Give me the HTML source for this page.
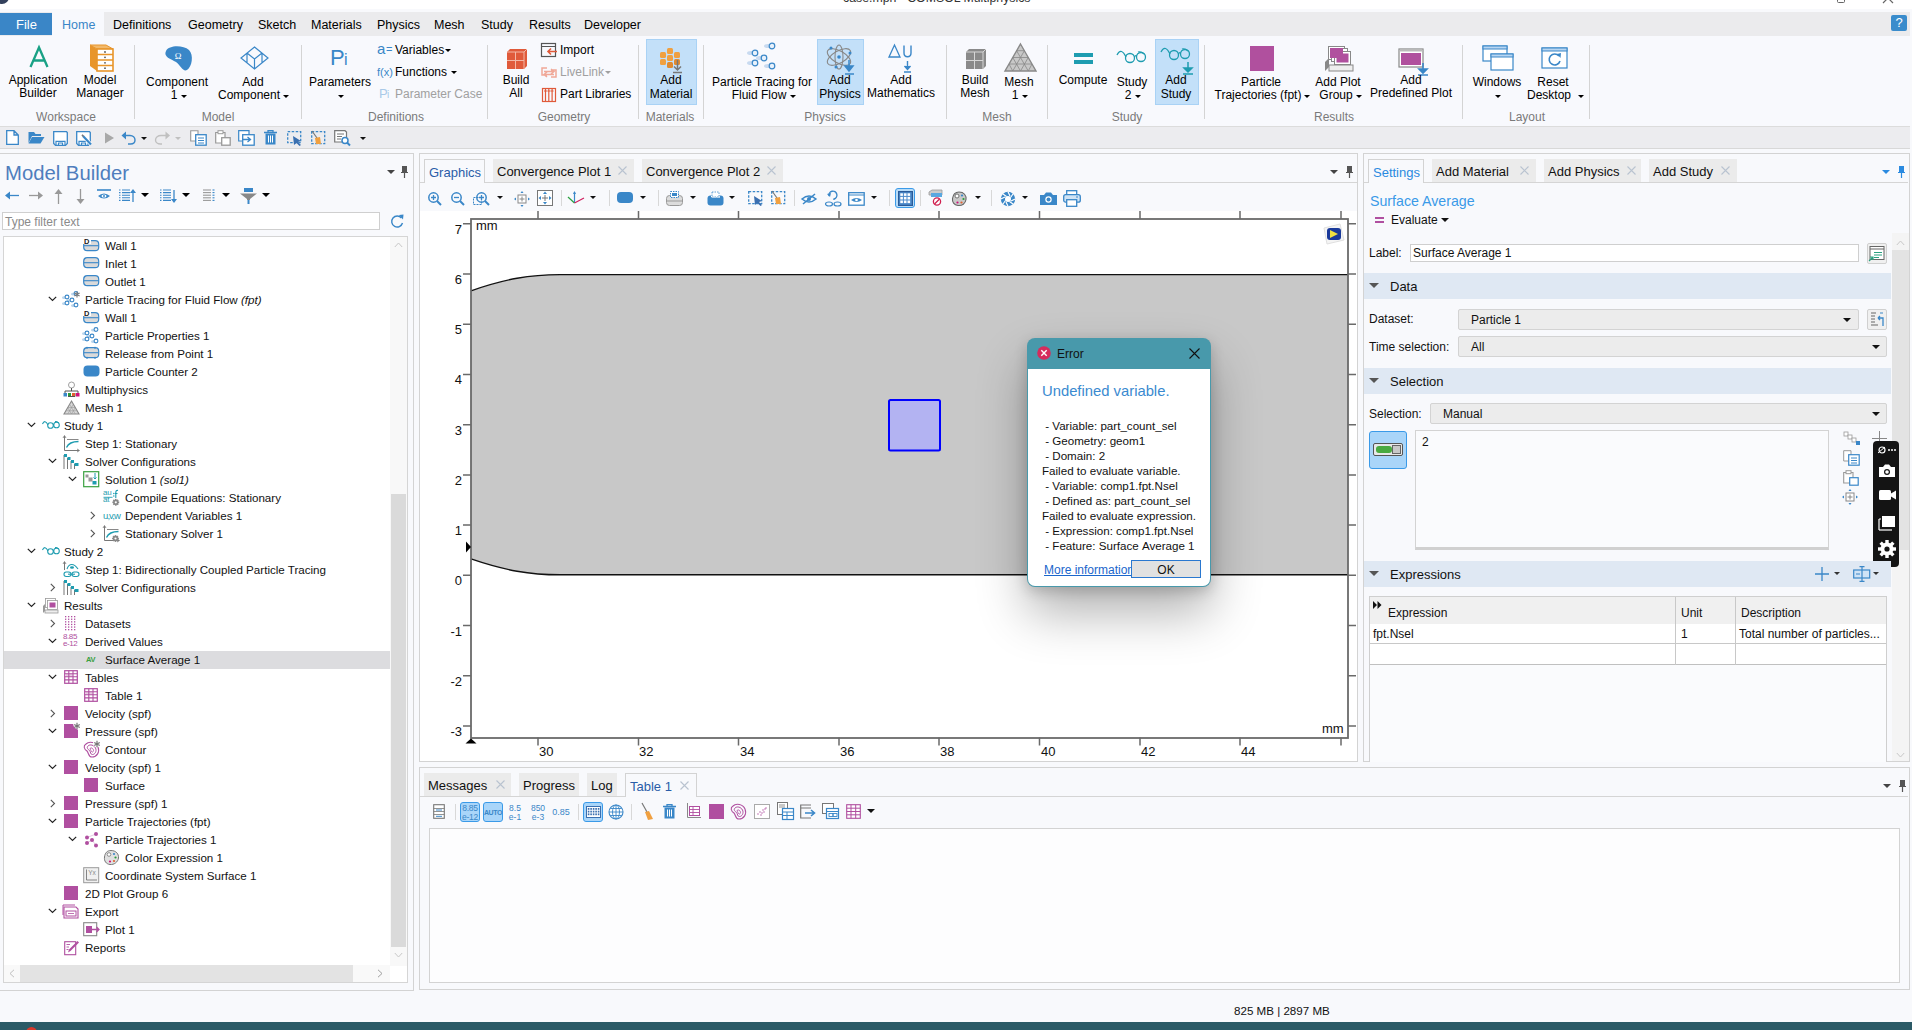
<!DOCTYPE html>
<html><head><meta charset="utf-8">
<style>
*{margin:0;padding:0;box-sizing:border-box}
html,body{width:1912px;height:1030px;overflow:hidden;background:#f8f9fc;font-family:"Liberation Sans",sans-serif;font-size:12px;color:#000}
.a{position:absolute}
.t{position:absolute;white-space:nowrap;line-height:1}
svg{position:absolute;overflow:visible}
#title{left:0;top:0;width:1912px;height:9px;background:#fff}
#menubar{left:0;top:12px;width:1910px;height:24px;background:#ebebed}
#ribbon{left:0;top:36px;width:1910px;height:91px;background:#f8f9fd;border-bottom:1px solid #dcdcdc}
#qat{left:0;top:127px;width:1910px;height:22px;background:#ececef;border-bottom:1px solid #d8d8d8}
.panel{position:absolute;border:1px solid #d3d3d3;background:#f8f9fc}
.tab{position:absolute;height:23px;background:#ebebeb;font-size:13px;line-height:23px;padding-left:5px;white-space:nowrap}
.tab.act{background:#f8f9fc;border:1px solid #d3d3d3;border-bottom:none;color:#2a5da8}
.x{color:#b8c4d4;font-size:14px}
.tree{font-size:12px}
.ri{position:absolute;white-space:nowrap;line-height:18px;height:18px}
</style></head><body>

<div id="title" class="a"></div>
<div id="menubar" class="a"></div>
<div id="ribbon" class="a"></div>
<div id="qat" class="a"></div>
<!-- title -->
<div class="t" style="left:843px;top:-8px;font-size:12.3px;color:#333">case.mph - COMSOL Multiphysics</div>
<div class="a" style="left:1837px;top:-5px;width:8px;height:8px;border:1.2px solid #666;border-radius:1.5px"></div>
<svg style="left:1882px;top:0" width="12" height="5"><path d="M1,3 L4.5,-0.5 M7.5,-0.5 L11,3" stroke="#666" stroke-width="1.2"/></svg>
<svg style="left:0;top:0" width="12" height="5"><circle cx="2" cy="-3" r="7" fill="#33415c"/></svg>
<!-- menu -->
<div class="a" style="left:0;top:13px;width:52px;height:22px;background:#3a86c7"></div>
<div class="t" style="left:16px;top:18px;font-size:13px;color:#fff">File</div>
<div class="a" style="left:52px;top:12px;width:52px;height:24px;background:#f8f9fd"></div>
<div class="t" style="left:62px;top:19px;font-size:12.5px;color:#3a86c7">Home</div>
<div class="t" style="left:113px;top:19px;font-size:12.5px">Definitions</div>
<div class="t" style="left:188px;top:19px;font-size:12.5px">Geometry</div>
<div class="t" style="left:258px;top:19px;font-size:12.5px">Sketch</div>
<div class="t" style="left:311px;top:19px;font-size:12.5px">Materials</div>
<div class="t" style="left:377px;top:19px;font-size:12.5px">Physics</div>
<div class="t" style="left:434px;top:19px;font-size:12.5px">Mesh</div>
<div class="t" style="left:481px;top:19px;font-size:12.5px">Study</div>
<div class="t" style="left:529px;top:19px;font-size:12.5px">Results</div>
<div class="t" style="left:584px;top:19px;font-size:12.5px">Developer</div>
<div class="a" style="left:1891px;top:15px;width:16px;height:16px;border-radius:2px;background:#3a8ccc;color:#fff;font-size:13px;text-align:center;line-height:16px">?</div>
<!-- RIBBON -->
<div id="rib"></div>

<!-- Model builder panel -->
<div class="panel" style="left:0;top:153px;width:414px;height:838px;border-left:none"></div>
<!-- graphics panel -->
<div class="panel" style="left:419px;top:153px;width:939px;height:609px"></div>
<!-- settings panel -->
<div class="panel" style="left:1363px;top:153px;width:547px;height:609px"></div>
<!-- messages panel -->
<div class="panel" style="left:419px;top:767px;width:1491px;height:223px"></div>
<!-- taskbar -->
<div class="a" style="left:0;top:1022px;width:1912px;height:8px;background:#2b5a66"></div>
<div class="a" style="left:26px;top:1027px;width:11px;height:11px;border-radius:50%;background:#d8392b"></div>

<div class="a" style="left:134px;top:45px;width:1px;height:74px;background:#d4d4d4"></div>
<div class="a" style="left:301px;top:45px;width:1px;height:74px;background:#d4d4d4"></div>
<div class="a" style="left:487px;top:45px;width:1px;height:74px;background:#d4d4d4"></div>
<div class="a" style="left:638px;top:45px;width:1px;height:74px;background:#d4d4d4"></div>
<div class="a" style="left:703px;top:45px;width:1px;height:74px;background:#d4d4d4"></div>
<div class="a" style="left:946px;top:45px;width:1px;height:74px;background:#d4d4d4"></div>
<div class="a" style="left:1047px;top:45px;width:1px;height:74px;background:#d4d4d4"></div>
<div class="a" style="left:1204px;top:45px;width:1px;height:74px;background:#d4d4d4"></div>
<div class="a" style="left:1462px;top:45px;width:1px;height:74px;background:#d4d4d4"></div>
<div class="a" style="left:1589px;top:45px;width:1px;height:74px;background:#d4d4d4"></div>
<div class="t" style="left:-84px;width:300px;text-align:center;top:111px;font-size:12px;color:#7a7a7a;">Workspace</div>
<div class="t" style="left:68px;width:300px;text-align:center;top:111px;font-size:12px;color:#7a7a7a;">Model</div>
<div class="t" style="left:246px;width:300px;text-align:center;top:111px;font-size:12px;color:#7a7a7a;">Definitions</div>
<div class="t" style="left:414px;width:300px;text-align:center;top:111px;font-size:12px;color:#7a7a7a;">Geometry</div>
<div class="t" style="left:520px;width:300px;text-align:center;top:111px;font-size:12px;color:#7a7a7a;">Materials</div>
<div class="t" style="left:675px;width:300px;text-align:center;top:111px;font-size:12px;color:#7a7a7a;">Physics</div>
<div class="t" style="left:847px;width:300px;text-align:center;top:111px;font-size:12px;color:#7a7a7a;">Mesh</div>
<div class="t" style="left:977px;width:300px;text-align:center;top:111px;font-size:12px;color:#7a7a7a;">Study</div>
<div class="t" style="left:1184px;width:300px;text-align:center;top:111px;font-size:12px;color:#7a7a7a;">Results</div>
<div class="t" style="left:1377px;width:300px;text-align:center;top:111px;font-size:12px;color:#7a7a7a;">Layout</div>
<div class="a" style="left:646px;top:39px;width:51px;height:66px;background:#c3e0f9;border:1px solid #a9d2f5"></div>
<div class="a" style="left:817px;top:39px;width:47px;height:66px;background:#c3e0f9;border:1px solid #a9d2f5"></div>
<div class="a" style="left:1155px;top:39px;width:44px;height:66px;background:#c3e0f9;border:1px solid #a9d2f5"></div>
<svg style="left:29px;top:46px" width="20" height="22" viewBox="0 0 20 22"><path d="M1.5,21 L10,1.5 L18.5,21 M4.8,14.5 H15.2" stroke="#19a185" stroke-width="2.3" fill="none"/></svg>
<div class="t" style="left:-112px;width:300px;text-align:center;top:74px;font-size:12px;color:#000;">Application</div>
<div class="t" style="left:-112px;width:300px;text-align:center;top:87px;font-size:12px;color:#000;">Builder</div>
<svg style="left:89px;top:44px" width="26" height="28" viewBox="0 0 26 28"><path d="M1,1 L8,5 L8,27 L1,22 Z" fill="#e8952a"/><path d="M1,1 L17,1 L24,5 L8,5 Z" fill="#f2b96a" stroke="#e8952a" stroke-width="1"/><rect x="8" y="5" width="16" height="22" fill="#fff" stroke="#e8952a" stroke-width="1.6"/><path d="M8,10.5 H24 M8,16 H24 M8,21.5 H24" stroke="#e8952a" stroke-width="1.4"/><circle cx="16" cy="8" r="0.9" fill="#555"/><circle cx="16" cy="13.3" r="0.9" fill="#555"/><circle cx="16" cy="18.8" r="0.9" fill="#555"/><circle cx="16" cy="24.2" r="0.9" fill="#555"/></svg>
<div class="t" style="left:-50px;width:300px;text-align:center;top:74px;font-size:12px;color:#000;">Model</div>
<div class="t" style="left:-50px;width:300px;text-align:center;top:87px;font-size:12px;color:#000;">Manager</div>
<svg style="left:163px;top:45px" width="30" height="27" viewBox="0 0 30 27"><path d="M3,6 C6,0 20,0 26,5 C31,10 29,22 24,25 C20,27 18,21 13,17 C8,14 0,12 3,6 Z" fill="#3a87c8"/><text x="15" y="14" font-size="9" fill="#fff" text-anchor="middle" font-family="Liberation Serif">Ω</text></svg>
<div class="t" style="left:27px;width:300px;text-align:center;top:76px;font-size:12px;color:#000;">Component</div>
<div class="t" style="left:24px;width:300px;text-align:center;top:89px;font-size:12px;color:#000;">1</div>
<div class="a" style="left:181px;top:95px;width:0;height:0;border-left:3px solid transparent;border-right:3px solid transparent;border-top:3px solid #000"></div>
<svg style="left:239px;top:46px" width="31" height="24" viewBox="0 0 31 24"><path d="M15.5,1 L29,12 L15.5,23 L2,12 Z M8,7 L15.5,13 L23,7 M15.5,13 V23 M8,7 V17 M23,7 V17" stroke="#3a87c8" stroke-width="1.2" fill="none"/></svg>
<div class="t" style="left:103px;width:300px;text-align:center;top:76px;font-size:12px;color:#000;">Add</div>
<div class="t" style="left:99px;width:300px;text-align:center;top:89px;font-size:12px;color:#000;">Component</div>
<div class="a" style="left:283px;top:95px;width:0;height:0;border-left:3px solid transparent;border-right:3px solid transparent;border-top:3px solid #000"></div>
<div class="t" style="left:330px;top:47px;font-size:22px;color:#3a87c8;">P</div>
<div class="t" style="left:344px;top:52px;font-size:16px;color:#3a87c8;">i</div>
<div class="t" style="left:190px;width:300px;text-align:center;top:76px;font-size:12px;color:#000;">Parameters</div>
<div class="a" style="left:338px;top:95px;width:0;height:0;border-left:3px solid transparent;border-right:3px solid transparent;border-top:3px solid #000"></div>
<div class="t" style="left:377px;top:41px;font-size:15px;color:#3a87c8;">a</div>
<div class="t" style="left:386px;top:44px;font-size:11px;color:#3a87c8;">=</div>
<div class="t" style="left:395px;top:44px;font-size:12px;color:#000;">Variables</div>
<div class="a" style="left:445px;top:49px;width:0;height:0;border-left:3px solid transparent;border-right:3px solid transparent;border-top:3px solid #000"></div>
<div class="t" style="left:377px;top:67px;font-size:11px;color:#3a87c8;">f(x)</div>
<div class="t" style="left:395px;top:66px;font-size:12px;color:#000;">Functions</div>
<div class="a" style="left:451px;top:71px;width:0;height:0;border-left:3px solid transparent;border-right:3px solid transparent;border-top:3px solid #000"></div>
<div class="t" style="left:379px;top:87px;font-size:13px;color:#a9c9e8;">P</div>
<div class="t" style="left:387px;top:90px;font-size:10px;color:#a9c9e8;">i</div>
<div class="t" style="left:395px;top:88px;font-size:12px;color:#a0a0a0;">Parameter Case</div>
<svg style="left:506px;top:48px" width="22" height="22" viewBox="0 0 22 22"><path d="M1,4 L4,1 L21,1 L21,18 L18,21 L1,21 Z" fill="#e05a3a"/><path d="M1,4 H18 V21 M18,4 L21,1 M1,12.5 H18 M9.5,4 V21" stroke="#f3b7a5" stroke-width="1" fill="none"/></svg>
<div class="t" style="left:366px;width:300px;text-align:center;top:74px;font-size:12px;color:#000;">Build</div>
<div class="t" style="left:366px;width:300px;text-align:center;top:87px;font-size:12px;color:#000;">All</div>
<svg style="left:541px;top:43px" width="17" height="14" viewBox="0 0 17 14"><rect x="0.5" y="0.5" width="14" height="13" fill="none" stroke="#555" stroke-width="1.2"/><path d="M0.5,3.5 H14.5" stroke="#555"/><path d="M16,8.5 H7 M10,5.5 L7,8.5 L10,11.5" stroke="#e05a3a" stroke-width="1.6" fill="none"/></svg>
<div class="t" style="left:560px;top:44px;font-size:12px;color:#000;">Import</div>
<svg style="left:541px;top:66px" width="16" height="13" viewBox="0 0 16 13"><path d="M6,2 H1 V9 H6 M10,4 H15 V11 H10 M3,5.5 H13 M10,3 L13,5.5 L10,8 M13,8.5 H3 M6,6 L3,8.5 L6,11" stroke="#f0a898" stroke-width="1.5" fill="none"/></svg>
<div class="t" style="left:560px;top:66px;font-size:12px;color:#a0a0a0;">LiveLink</div>
<div class="a" style="left:605px;top:71px;width:0;height:0;border-left:3px solid transparent;border-right:3px solid transparent;border-top:3px solid #a0a0a0"></div>
<svg style="left:542px;top:87px" width="15" height="15" viewBox="0 0 15 15"><rect x="0.5" y="1.5" width="13" height="13" fill="none" stroke="#e05a3a" stroke-width="1.2"/><path d="M3.5,1 V14 M6.8,1 V14 M10.1,1 V14 M2,4 H5 M5.3,4 H8.3 M8.6,4 H11.6" stroke="#e05a3a" stroke-width="1.2"/></svg>
<div class="t" style="left:560px;top:88px;font-size:12px;color:#000;">Part Libraries</div>
<svg style="left:657px;top:47px" width="26" height="27" viewBox="0 0 26 27"><rect x="3" y="5" width="6" height="6" rx="1.5" fill="#f0a040"/><rect x="10" y="1" width="6" height="6" rx="1.5" fill="#f0a040"/><rect x="17" y="5" width="6" height="6" rx="1.5" fill="#f0a040"/><rect x="3" y="12" width="6" height="6" rx="1.5" fill="#f0a040"/><rect x="10" y="8" width="6" height="6" rx="1.5" fill="#f0a040"/><rect x="17" y="12" width="6" height="6" rx="1.5" fill="#e08a30"/><rect x="10" y="15" width="6" height="6" rx="1.5" fill="#e08a30"/><path d="M20.5,13 V23 M17,19.5 L20.5,23 L24,19.5 M16,25.5 H25" stroke="#777" stroke-width="1.5" fill="none"/></svg>
<div class="t" style="left:521px;width:300px;text-align:center;top:74px;font-size:12px;color:#000;">Add</div>
<div class="t" style="left:521px;width:300px;text-align:center;top:88px;font-size:12px;color:#000;">Material</div>
<svg style="left:749px;top:43px" width="30" height="28" viewBox="0 0 30 28"><ellipse cx="19" cy="3" rx="4" ry="2" fill="#c8daf0"/><circle cx="23" cy="3" r="2.8" fill="#e8f1fb" stroke="#3a87c8" stroke-width="1.2"/><ellipse cx="2" cy="10" rx="4" ry="2" fill="#c8daf0"/><circle cx="6" cy="10" r="2.8" fill="#e8f1fb" stroke="#3a87c8" stroke-width="1.2"/><ellipse cx="11" cy="15" rx="4" ry="2" fill="#c8daf0"/><circle cx="15" cy="15" r="2.8" fill="#e8f1fb" stroke="#3a87c8" stroke-width="1.2"/><ellipse cx="2" cy="20" rx="4" ry="2" fill="#c8daf0"/><circle cx="6" cy="20" r="2.8" fill="#e8f1fb" stroke="#3a87c8" stroke-width="1.2"/><ellipse cx="19" cy="23" rx="4" ry="2" fill="#c8daf0"/><circle cx="23" cy="23" r="2.8" fill="#e8f1fb" stroke="#3a87c8" stroke-width="1.2"/></svg>
<div class="t" style="left:612px;width:300px;text-align:center;top:76px;font-size:12px;color:#000;">Particle Tracing for</div>
<div class="t" style="left:609px;width:300px;text-align:center;top:89px;font-size:12px;color:#000;">Fluid Flow</div>
<div class="a" style="left:790px;top:95px;width:0;height:0;border-left:3px solid transparent;border-right:3px solid transparent;border-top:3px solid #000"></div>
<svg style="left:826px;top:43px" width="30" height="32" viewBox="0 0 30 32"><ellipse cx="13" cy="14" rx="13" ry="6" fill="none" stroke="#888" stroke-width="1.1" transform="rotate(30 13 14)"/><ellipse cx="13" cy="14" rx="13" ry="6" fill="none" stroke="#888" stroke-width="1.1" transform="rotate(-30 13 14)"/><ellipse cx="13" cy="14" rx="4" ry="12" fill="none" stroke="#888" stroke-width="1.1"/><circle cx="13" cy="14" r="1.8" fill="#3a87c8"/><circle cx="5" cy="5" r="1.5" fill="#3a87c8"/><circle cx="24" cy="10" r="1.5" fill="#3a87c8"/><circle cx="10" cy="24" r="1.5" fill="#3a87c8"/><path d="M23,17 V27 M19,23 H27 L23,28 Z M19,31 H28" stroke="#3a87c8" stroke-width="1.5" fill="#3a87c8"/></svg>
<div class="t" style="left:690px;width:300px;text-align:center;top:74px;font-size:12px;color:#000;">Add</div>
<div class="t" style="left:690px;width:300px;text-align:center;top:88px;font-size:12px;color:#000;">Physics</div>
<svg style="left:888px;top:44px" width="30" height="30" viewBox="0 0 30 30"><path d="M1,13 L6.5,1 L12,13 Z" fill="none" stroke="#3a87c8" stroke-width="1.3"/><path d="M16,1.5 V9 C16,14 23,14 23,9 V1.5" fill="none" stroke="#3a87c8" stroke-width="1.4"/><path d="M19.5,17 V25 M16.5,22 L19.5,25.5 L22.5,22 M16,28 H23" stroke="#3a87c8" stroke-width="1.4" fill="#3a87c8"/></svg>
<div class="t" style="left:751px;width:300px;text-align:center;top:74px;font-size:12px;color:#000;">Add</div>
<div class="t" style="left:751px;width:300px;text-align:center;top:87px;font-size:12px;color:#000;">Mathematics</div>
<svg style="left:965px;top:48px" width="22" height="22" viewBox="0 0 22 22"><path d="M1,4 L4,1 L21,1 L21,18 L18,21 L1,21 Z" fill="#8a8a8a"/><path d="M1,4 H18 V21 M18,4 L21,1 M1,12.5 H18 M9.5,4 V21" stroke="#d6d6d6" stroke-width="1" fill="none"/></svg>
<div class="t" style="left:825px;width:300px;text-align:center;top:74px;font-size:12px;color:#000;">Build</div>
<div class="t" style="left:825px;width:300px;text-align:center;top:87px;font-size:12px;color:#000;">Mesh</div>
<svg style="left:1004px;top:43px" width="33" height="29" viewBox="0 0 33 29"><path d="M16.5,1 L32,28 L1,28 Z" fill="#c8c8c8" stroke="#888" stroke-width="1.4"/><path d="M8.75,14.5 H24.25 M5,21 H28 M12.6,7.7 H20.4 M16.5,28 L24.25,14.5 M16.5,28 L8.75,14.5 M8.75,28 L20.4,7.7 M24.25,28 L12.6,7.7 M5,21 L8.75,28 M28,21 L24.25,28" stroke="#888" stroke-width="0.8" fill="none"/></svg>
<div class="t" style="left:869px;width:300px;text-align:center;top:76px;font-size:12px;color:#000;">Mesh</div>
<div class="t" style="left:865px;width:300px;text-align:center;top:89px;font-size:12px;color:#000;">1</div>
<div class="a" style="left:1022px;top:95px;width:0;height:0;border-left:3px solid transparent;border-right:3px solid transparent;border-top:3px solid #000"></div>
<div class="a" style="left:1074px;top:53px;width:19px;height:4px;background:#1e9cb0"></div>
<div class="a" style="left:1074px;top:60px;width:19px;height:4px;background:#1e9cb0"></div>
<div class="t" style="left:933px;width:300px;text-align:center;top:74px;font-size:12px;color:#000;">Compute</div>
<svg style="left:1116px;top:49px" width="32" height="16" viewBox="0 0 32 16"><path d="M1,6 C4,0 7,2 10,8" fill="none" stroke="#1e9cb0" stroke-width="1.3"/><circle cx="14" cy="9" r="4.5" fill="none" stroke="#1e9cb0" stroke-width="1.3"/><circle cx="25" cy="8" r="4.5" fill="none" stroke="#1e9cb0" stroke-width="1.3"/><path d="M18.5,8 Q19.5,6 20.5,7 M22,3 Q25,2 28,5" fill="none" stroke="#1e9cb0" stroke-width="1.2"/></svg>
<div class="t" style="left:982px;width:300px;text-align:center;top:76px;font-size:12px;color:#000;">Study</div>
<div class="t" style="left:978px;width:300px;text-align:center;top:89px;font-size:12px;color:#000;">2</div>
<div class="a" style="left:1135px;top:95px;width:0;height:0;border-left:3px solid transparent;border-right:3px solid transparent;border-top:3px solid #000"></div>
<svg style="left:1160px;top:46px" width="32" height="16" viewBox="0 0 32 16"><path d="M1,6 C4,0 7,2 10,8" fill="none" stroke="#1e9cb0" stroke-width="1.3"/><circle cx="14" cy="9" r="4.5" fill="none" stroke="#1e9cb0" stroke-width="1.3"/><circle cx="25" cy="8" r="4.5" fill="none" stroke="#1e9cb0" stroke-width="1.3"/><path d="M18.5,8 Q19.5,6 20.5,7 M22,3 Q25,2 28,5" fill="none" stroke="#1e9cb0" stroke-width="1.2"/></svg>
<svg style="left:1182px;top:62px" width="12" height="13" viewBox="0 0 12 13"><path d="M6,0 V9 M2,6 H10 L6,10 Z M1,12 H11" stroke="#1e9cb0" stroke-width="1.5" fill="#1e9cb0"/></svg>
<div class="t" style="left:1026px;width:300px;text-align:center;top:74px;font-size:12px;color:#000;">Add</div>
<div class="t" style="left:1026px;width:300px;text-align:center;top:88px;font-size:12px;color:#000;">Study</div>
<div class="a" style="left:1250px;top:46px;width:24px;height:25px;background:#b0509e"></div>
<div class="t" style="left:1111px;width:300px;text-align:center;top:76px;font-size:12px;color:#000;">Particle</div>
<div class="t" style="left:1108px;width:300px;text-align:center;top:89px;font-size:12px;color:#000;">Trajectories (fpt)</div>
<div class="a" style="left:1304px;top:95px;width:0;height:0;border-left:3px solid transparent;border-right:3px solid transparent;border-top:3px solid #000"></div>
<svg style="left:1324px;top:45px" width="31" height="28" viewBox="0 0 31 28"><path d="M1,17 L5,13 V22 L1,26 Z" fill="#888"/><rect x="5" y="20" width="24" height="6" fill="#eee" stroke="#888" stroke-width="1"/><rect x="4.5" y="1.5" width="16" height="13" fill="#fff" stroke="#888"/><rect x="7.5" y="3.5" width="16" height="13" fill="#fff" stroke="#888"/><rect x="10.5" y="6.5" width="16" height="13" fill="#fff" stroke="#888"/><rect x="12.5" y="8.5" width="12" height="9" fill="#b0509e"/><rect x="6" y="3" width="13" height="10" fill="#b0509e"/></svg>
<div class="t" style="left:1188px;width:300px;text-align:center;top:76px;font-size:12px;color:#000;">Add Plot</div>
<div class="t" style="left:1186px;width:300px;text-align:center;top:89px;font-size:12px;color:#000;">Group</div>
<div class="a" style="left:1356px;top:95px;width:0;height:0;border-left:3px solid transparent;border-right:3px solid transparent;border-top:3px solid #000"></div>
<svg style="left:1398px;top:48px" width="31" height="28" viewBox="0 0 31 28"><rect x="1" y="1" width="24" height="18" fill="#fff" stroke="#888" stroke-width="1.2"/><rect x="1.5" y="1.5" width="23" height="2" fill="#bbb"/><rect x="3" y="5" width="20" height="12" fill="#b0509e"/><path d="M25,15 V25 M21,21 H29 L25,25 Z M20,27 H30" stroke="#3a87c8" stroke-width="1.6" fill="#3a87c8"/></svg>
<div class="t" style="left:1261px;width:300px;text-align:center;top:74px;font-size:12px;color:#000;">Add</div>
<div class="t" style="left:1261px;width:300px;text-align:center;top:87px;font-size:12px;color:#000;">Predefined Plot</div>
<svg style="left:1482px;top:45px" width="33" height="27" viewBox="0 0 33 27"><rect x="1" y="1" width="24" height="15" fill="#fff" stroke="#3a87c8" stroke-width="1.2"/><rect x="1" y="1" width="24" height="3" fill="#b8d6f2" stroke="#3a87c8" stroke-width="1"/><rect x="9" y="9" width="22" height="16" fill="#fff" stroke="#3a87c8" stroke-width="1.2"/><rect x="9" y="9" width="22" height="3" fill="#b8d6f2" stroke="#3a87c8" stroke-width="1"/></svg>
<div class="t" style="left:1347px;width:300px;text-align:center;top:76px;font-size:12px;color:#000;">Windows</div>
<div class="a" style="left:1495px;top:95px;width:0;height:0;border-left:3px solid transparent;border-right:3px solid transparent;border-top:3px solid #000"></div>
<svg style="left:1541px;top:47px" width="28" height="23" viewBox="0 0 28 23"><rect x="1" y="1" width="25" height="20" fill="#fff" stroke="#3a87c8" stroke-width="1.2"/><rect x="1" y="1" width="25" height="3" fill="#b8d6f2" stroke="#3a87c8" stroke-width="1"/><path d="M18,9 A5.5,5.5 0 1 0 19,14" fill="none" stroke="#3a87c8" stroke-width="1.6"/><path d="M16,7 L20,6 L19.5,11 Z" fill="#3a87c8"/></svg>
<div class="t" style="left:1403px;width:300px;text-align:center;top:76px;font-size:12px;color:#000;">Reset</div>
<div class="t" style="left:1399px;width:300px;text-align:center;top:89px;font-size:12px;color:#000;">Desktop</div>
<div class="a" style="left:1578px;top:95px;width:0;height:0;border-left:3px solid transparent;border-right:3px solid transparent;border-top:3px solid #000"></div>
<svg style="left:6px;top:130px" width="13" height="15" viewBox="0 0 13 15"><path d="M0.7,0.7 H8 L12.3,5 V14.3 H0.7 Z M8,0.7 V5 H12.3" fill="#fff" stroke="#3a87c8" stroke-width="1.3"/></svg>
<svg style="left:28px;top:131px" width="17" height="13" viewBox="0 0 17 13"><path d="M0.5,1 H6 L7.5,3 H13 V5 H4 L0.5,12 Z" fill="#3a87c8"/><path d="M4,6 H16.5 L12.5,12.5 H0.5 Z" fill="#3a87c8"/></svg>
<svg style="left:53px;top:131px" width="15" height="15" viewBox="0 0 15 15"><path d="M0.7,0.7 H13.5 L14.3,1.5 V12.5 L12.5,14.3 H2.5 L0.7,12.5 Z" fill="#fff" stroke="#3a87c8" stroke-width="1.3"/><path d="M3,14 V10.3 H12 V14 M5.5,14 V12 H9.5 V14" fill="none" stroke="#3a87c8" stroke-width="1.2"/></svg>
<svg style="left:76px;top:131px" width="17" height="16" viewBox="0 0 17 16"><path d="M0.7,0.7 H13.5 L14.3,1.5 V12.5 L12.5,14.3 H2.5 L0.7,12.5 Z" fill="#fff" stroke="#3a87c8" stroke-width="1.3"/><path d="M3,14 V10.3 H12 V14 M5.5,14 V12 H9.5 V14" fill="none" stroke="#3a87c8" stroke-width="1.2"/><path d="M6.5,4.5 L15,13.5" stroke="#fff" stroke-width="3.5"/><path d="M7,5 L15,13.5" stroke="#3a87c8" stroke-width="2.2"/><path d="M6,3.8 L7.5,5.5" stroke="#777" stroke-width="1.6"/></svg>
<svg style="left:104px;top:132px" width="11" height="12" viewBox="0 0 11 12"><path d="M1,0.5 L10,6 L1,11.5 Z" fill="#a8a8a8"/></svg>
<svg style="left:121px;top:131px" width="15" height="14" viewBox="0 0 15 14"><path d="M2,4.5 H9 C12,4.5 14,6.5 14,9 C14,11.5 12,13 9.5,13 H7" fill="none" stroke="#3a87c8" stroke-width="1.4"/><path d="M0.5,4.5 L5,0.5 V8.5 Z" fill="#3a87c8"/></svg>
<div class="a" style="left:141px;top:137px;width:0;height:0;border-left:3px solid transparent;border-right:3px solid transparent;border-top:3px solid #111"></div>
<svg style="left:154px;top:131px" width="17" height="14" viewBox="0 0 17 14"><path d="M14,4.5 H7 C4,4.5 1.5,6.5 1.5,9 C1.5,11.5 4,13 6.5,13 H8" fill="none" stroke="#c0c0c0" stroke-width="1.4"/><path d="M16,4.5 L11.5,0.5 V8.5 Z" fill="#c0c0c0"/></svg>
<div class="a" style="left:175px;top:137px;width:0;height:0;border-left:3px solid transparent;border-right:3px solid transparent;border-top:3px solid #c0c0c0"></div>
<svg style="left:190px;top:130px" width="17" height="16" viewBox="0 0 17 16"><path d="M0.7,0.7 H8 V11 H0.7 Z" fill="#fff" stroke="#999" stroke-width="1.1"/><rect x="5.7" y="4.7" width="10.5" height="10.5" fill="#fff" stroke="#3a87c8" stroke-width="1.3"/><path d="M8,8 H14 M8,10.5 H14 M8,13 H14" stroke="#3a87c8" stroke-width="1"/></svg>
<svg style="left:215px;top:130px" width="16" height="16" viewBox="0 0 16 16"><path d="M0.7,2.5 H10 V13 H0.7 Z" fill="#fff" stroke="#999" stroke-width="1.2"/><rect x="3" y="0.7" width="5" height="3" fill="#fff" stroke="#999" stroke-width="1"/><rect x="6.7" y="7.7" width="8.5" height="7.5" fill="#fff" stroke="#999" stroke-width="1.3"/></svg>
<svg style="left:238px;top:130px" width="17" height="16" viewBox="0 0 17 16"><path d="M0.7,0.7 H11 V11 H0.7 Z" fill="#fff" stroke="#3a87c8" stroke-width="1.2"/><rect x="4.7" y="4.7" width="11.5" height="10.5" fill="#fff" stroke="#3a87c8" stroke-width="1.3"/><path d="M4,9.5 H12 M9.5,7 L12.5,9.5 L9.5,12" fill="none" stroke="#3a87c8" stroke-width="1.3"/></svg>
<svg style="left:264px;top:130px" width="13" height="15" viewBox="0 0 13 15"><path d="M0,2.5 H13 M4,2.5 V0.7 H9 V2.5" fill="none" stroke="#3a87c8" stroke-width="1.3"/><path d="M1.5,3.5 H11.5 V14.5 H1.5 Z" fill="#3a87c8"/><path d="M4.5,5.5 V12.5 M6.5,5.5 V12.5 M8.5,5.5 V12.5" stroke="#fff" stroke-width="1"/></svg>
<svg style="left:287px;top:131px" width="16" height="15" viewBox="0 0 16 15"><rect x="0.7" y="0.7" width="13" height="11" fill="none" stroke="#3a87c8" stroke-width="1.3" stroke-dasharray="2.5,1.5"/><path d="M6,5 L14,10 L11,11 L14,14 L12.5,15 L9.5,12 L7,14 Z" fill="#3a6fb0"/></svg>
<svg style="left:311px;top:131px" width="15" height="14" viewBox="0 0 15 14"><rect x="0.7" y="0.7" width="13" height="12" fill="none" stroke="#3a87c8" stroke-width="1.3" stroke-dasharray="2.5,1.5"/><path d="M1,0 L6,7" stroke="#777" stroke-width="1.2"/><path d="M4,7 L9,6 L10,13 L5,13 Z" fill="#f0a040"/></svg>
<svg style="left:334px;top:130px" width="17" height="16" viewBox="0 0 17 16"><path d="M0.7,0.7 H11 L12.5,2 V12 H0.7 Z" fill="#fff" stroke="#777" stroke-width="1.2"/><path d="M3,4 H10 M3,6.5 H8 M3,9 H7" stroke="#777" stroke-width="1"/><circle cx="11" cy="10.5" r="3" fill="#fff" stroke="#3a87c8" stroke-width="1.5"/><path d="M13,12.5 L16,15.5" stroke="#3a87c8" stroke-width="2"/></svg>
<div class="a" style="left:360px;top:137px;width:0;height:0;border-left:3px solid transparent;border-right:3px solid transparent;border-top:3px solid #111"></div>
<div class="t" style="left:5px;top:163px;font-size:20.3px;color:#4f7dbd;font-weight:300">Model Builder</div>
<div class="a" style="left:387px;top:170px;width:0;height:0;border-left:4px solid transparent;border-right:4px solid transparent;border-top:4px solid #444"></div>
<svg style="left:401px;top:166px" width="7" height="12" viewBox="0 0 7 12"><path d="M1,0 H6 V6 H7 V7 H0 V6 H1 Z" fill="#555"/><path d="M3.5,7 V12" stroke="#555" stroke-width="1.2"/></svg>
<svg style="left:5px;top:190px" width="15" height="11" viewBox="0 0 15 11"><path d="M14,5.5 H3" stroke="#3a87c8" stroke-width="1.3"/><path d="M0,5.5 L5,1.5 V9.5 Z" fill="#3a87c8"/></svg>
<svg style="left:28px;top:190px" width="15" height="11" viewBox="0 0 15 11"><path d="M1,5.5 H12" stroke="#999" stroke-width="1.3"/><path d="M15,5.5 L10,1.5 V9.5 Z" fill="#999"/></svg>
<svg style="left:54px;top:189px" width="9" height="15" viewBox="0 0 9 15"><path d="M4.5,3 V15" stroke="#999" stroke-width="1.3"/><path d="M4.5,0 L0.5,5 H8.5 Z" fill="#999"/></svg>
<svg style="left:76px;top:189px" width="9" height="15" viewBox="0 0 9 15"><path d="M4.5,0 V12" stroke="#999" stroke-width="1.3"/><path d="M4.5,15 L0.5,10 H8.5 Z" fill="#999"/></svg>
<svg style="left:97px;top:189px" width="14" height="12" viewBox="0 0 14 12"><path d="M0,1 H14" stroke="#3a87c8" stroke-width="1.6"/><path d="M1,7 Q7,2 13,7 Q7,12 1,7 Z" fill="#3a87c8"/><ellipse cx="7" cy="7" rx="2.5" ry="1.5" fill="#fff"/><circle cx="7" cy="7" r="1" fill="#3a87c8"/></svg>
<svg style="left:119px;top:189px" width="17" height="14" viewBox="0 0 17 14"><path d="M0,1.0 H1.5 M3,1.0 H11" stroke="#3a87c8" stroke-width="1.1"/><path d="M0,3.6 H1.5 M3,3.6 H11" stroke="#3a87c8" stroke-width="1.1"/><path d="M0,6.2 H1.5 M3,6.2 H11" stroke="#3a87c8" stroke-width="1.1"/><path d="M0,8.8 H1.5 M3,8.8 H11" stroke="#3a87c8" stroke-width="1.1"/><path d="M0,11.4 H1.5 M3,11.4 H11" stroke="#3a87c8" stroke-width="1.1"/><path d="M14,13 V3" stroke="#3a87c8" stroke-width="1.3"/><path d="M14,0 L11,4 H17 Z" fill="#3a87c8"/></svg>
<div class="a" style="left:141px;top:193px;width:0;height:0;border-left:4px solid transparent;border-right:4px solid transparent;border-top:4px solid #000"></div>
<svg style="left:160px;top:189px" width="17" height="14" viewBox="0 0 17 14"><path d="M0,1.0 H1.5 M3,1.0 H11" stroke="#3a87c8" stroke-width="1.1"/><path d="M0,3.6 H1.5 M3,3.6 H11" stroke="#3a87c8" stroke-width="1.1"/><path d="M0,6.2 H1.5 M3,6.2 H11" stroke="#3a87c8" stroke-width="1.1"/><path d="M0,8.8 H1.5 M3,8.8 H11" stroke="#3a87c8" stroke-width="1.1"/><path d="M0,11.4 H1.5 M3,11.4 H11" stroke="#3a87c8" stroke-width="1.1"/><path d="M14,1 V11" stroke="#3a87c8" stroke-width="1.3"/><path d="M14,14 L11,10 H17 Z" fill="#3a87c8"/></svg>
<div class="a" style="left:182px;top:193px;width:0;height:0;border-left:4px solid transparent;border-right:4px solid transparent;border-top:4px solid #000"></div>
<svg style="left:203px;top:189px" width="12" height="14" viewBox="0 0 12 14"><path d="M0,1.0 H8" stroke="#999" stroke-width="1.1"/><path d="M9.5,1.0 H11.5" stroke="#3a87c8" stroke-width="1.1"/><path d="M0,3.6 H8" stroke="#999" stroke-width="1.1"/><path d="M9.5,3.6 H11.5" stroke="#3a87c8" stroke-width="1.1"/><path d="M0,6.2 H8" stroke="#999" stroke-width="1.1"/><path d="M9.5,6.2 H11.5" stroke="#3a87c8" stroke-width="1.1"/><path d="M0,8.8 H8" stroke="#999" stroke-width="1.1"/><path d="M9.5,8.8 H11.5" stroke="#3a87c8" stroke-width="1.1"/><path d="M0,11.4 H8" stroke="#999" stroke-width="1.1"/><path d="M9.5,11.4 H11.5" stroke="#3a87c8" stroke-width="1.1"/></svg>
<div class="a" style="left:222px;top:193px;width:0;height:0;border-left:4px solid transparent;border-right:4px solid transparent;border-top:4px solid #000"></div>
<svg style="left:240px;top:188px" width="17" height="16" viewBox="0 0 17 16"><rect x="4" y="0" width="9" height="4" fill="#3a87c8"/><path d="M0,5.5 H17 L10,11 V12 H7 V11 Z" fill="#888"/><rect x="7.5" y="12" width="2" height="4" fill="#3a87c8"/></svg>
<div class="a" style="left:262px;top:193px;width:0;height:0;border-left:4px solid transparent;border-right:4px solid transparent;border-top:4px solid #000"></div>
<div class="a" style="left:2px;top:212px;width:378px;height:18px;background:#fff;border:1px solid #cfcfcf"></div>
<div class="t" style="left:5px;top:216px;font-size:12px;color:#8a8a8a;">Type filter text</div>
<svg style="left:390px;top:214px" width="14" height="14" viewBox="0 0 14 14"><path d="M11.5,4 A5.5,5.5 0 1 0 12.5,9" fill="none" stroke="#3a87c8" stroke-width="1.4"/><path d="M9,1 L13.5,0.5 L13,5.5 Z" fill="#3a87c8"/></svg>
<div class="a" style="left:3px;top:236px;width:405px;height:747px;background:#fff;border:1px solid #d5d5d5"></div>
<div class="a" style="left:4px;top:651px;width:386px;height:18px;background:#dcdcdf"></div>
<svg style="left:83px;top:240px" width="17" height="12" viewBox="0 0 17 12"><rect x="0.7" y="0.7" width="15" height="10" rx="3.5" fill="#dadada" stroke="#3a87c8" stroke-width="1.2"/><path d="M1,5.7 H15.7" stroke="#3a87c8" stroke-width="1.1"/></svg><div class="a" style="left:83px;top:238px;width:8px;height:6px;background:#fff"></div><div class="t" style="left:84px;top:238px;font-size:7.5px;color:#222;font-weight:bold">D</div>
<div class="t" style="left:105px;top:240px;font-size:11.6px;color:#111;">Wall 1</div>
<svg style="left:83px;top:257px" width="17" height="12" viewBox="0 0 17 12"><rect x="0.7" y="0.7" width="15" height="10" rx="3.5" fill="#dadada" stroke="#3a87c8" stroke-width="1.2"/><path d="M1,5.7 H15.7" stroke="#3a87c8" stroke-width="1.1"/></svg>
<div class="t" style="left:105px;top:258px;font-size:11.6px;color:#111;">Inlet 1</div>
<svg style="left:83px;top:275px" width="17" height="12" viewBox="0 0 17 12"><rect x="0.7" y="0.7" width="15" height="10" rx="3.5" fill="#dadada" stroke="#3a87c8" stroke-width="1.2"/><path d="M1,5.7 H15.7" stroke="#3a87c8" stroke-width="1.1"/></svg>
<div class="t" style="left:105px;top:276px;font-size:11.6px;color:#111;">Outlet 1</div>
<svg style="left:48px;top:296px" width="9" height="6" viewBox="0 0 9 6"><path d="M0.8,0.8 L4.5,4.5 L8.2,0.8" fill="none" stroke="#222" stroke-width="1.2"/></svg>
<svg style="left:63px;top:291px" width="17" height="17" viewBox="0 0 17 17"><ellipse cx="11" cy="3.0" rx="3" ry="1.6" fill="#3a87c8" opacity="0.35"/><circle cx="13" cy="2.5" r="1.9" fill="#fff" stroke="#3a87c8" stroke-width="1.1"/><ellipse cx="2" cy="6.5" rx="3" ry="1.6" fill="#3a87c8" opacity="0.35"/><circle cx="4" cy="6" r="1.9" fill="#fff" stroke="#3a87c8" stroke-width="1.1"/><ellipse cx="7" cy="9.5" rx="3" ry="1.6" fill="#3a87c8" opacity="0.35"/><circle cx="9" cy="9" r="1.9" fill="#fff" stroke="#3a87c8" stroke-width="1.1"/><ellipse cx="2" cy="12.5" rx="3" ry="1.6" fill="#3a87c8" opacity="0.35"/><circle cx="4" cy="12" r="1.9" fill="#fff" stroke="#3a87c8" stroke-width="1.1"/><ellipse cx="11" cy="14.5" rx="3" ry="1.6" fill="#3a87c8" opacity="0.35"/><circle cx="13" cy="14" r="1.9" fill="#fff" stroke="#3a87c8" stroke-width="1.1"/><path d="M14,0.5 V6.5 M11.4,2 L16.6,5 M11.4,5 L16.6,2" stroke="#777" stroke-width="1.1"/></svg>
<div class="t" style="left:85px;top:294px;font-size:11.6px;color:#111;">Particle Tracing for Fluid Flow <i>(fpt)</i></div>
<svg style="left:83px;top:312px" width="17" height="12" viewBox="0 0 17 12"><rect x="0.7" y="0.7" width="15" height="10" rx="3.5" fill="#dadada" stroke="#3a87c8" stroke-width="1.2"/><path d="M1,5.7 H15.7" stroke="#3a87c8" stroke-width="1.1"/></svg><div class="a" style="left:83px;top:310px;width:8px;height:6px;background:#fff"></div><div class="t" style="left:84px;top:310px;font-size:7.5px;color:#222;font-weight:bold">D</div>
<div class="t" style="left:105px;top:312px;font-size:11.6px;color:#111;">Wall 1</div>
<svg style="left:83px;top:327px" width="17" height="17" viewBox="0 0 17 17"><ellipse cx="11" cy="3.0" rx="3" ry="1.6" fill="#3a87c8" opacity="0.35"/><circle cx="13" cy="2.5" r="1.9" fill="#fff" stroke="#3a87c8" stroke-width="1.1"/><ellipse cx="2" cy="6.5" rx="3" ry="1.6" fill="#3a87c8" opacity="0.35"/><circle cx="4" cy="6" r="1.9" fill="#fff" stroke="#3a87c8" stroke-width="1.1"/><ellipse cx="7" cy="9.5" rx="3" ry="1.6" fill="#3a87c8" opacity="0.35"/><circle cx="9" cy="9" r="1.9" fill="#fff" stroke="#3a87c8" stroke-width="1.1"/><ellipse cx="2" cy="12.5" rx="3" ry="1.6" fill="#3a87c8" opacity="0.35"/><circle cx="4" cy="12" r="1.9" fill="#fff" stroke="#3a87c8" stroke-width="1.1"/><ellipse cx="11" cy="14.5" rx="3" ry="1.6" fill="#3a87c8" opacity="0.35"/><circle cx="13" cy="14" r="1.9" fill="#fff" stroke="#3a87c8" stroke-width="1.1"/></svg>
<div class="t" style="left:105px;top:330px;font-size:11.6px;color:#111;">Particle Properties 1</div>
<svg style="left:83px;top:347px" width="17" height="12" viewBox="0 0 17 12"><rect x="0.7" y="0.7" width="15" height="10" rx="3.5" fill="#dadada" stroke="#3a87c8" stroke-width="1.2"/><path d="M1,5.7 H15.7" stroke="#3a87c8" stroke-width="1.1"/><circle cx="4" cy="0.8" r="1" fill="#3a87c8"/><circle cx="12" cy="0.8" r="1" fill="#3a87c8"/><circle cx="4" cy="10.8" r="1" fill="#3a87c8"/><circle cx="12" cy="10.8" r="1" fill="#3a87c8"/></svg>
<div class="t" style="left:105px;top:348px;font-size:11.6px;color:#111;">Release from Point 1</div>
<svg style="left:83px;top:365px" width="17" height="12" viewBox="0 0 17 12"><rect x="0.5" y="0.5" width="16" height="11" rx="4" fill="#3a87c8"/></svg>
<div class="t" style="left:105px;top:366px;font-size:11.6px;color:#111;">Particle Counter 2</div>
<svg style="left:63px;top:381px" width="17" height="17" viewBox="0 0 17 17"><circle cx="8.5" cy="4" r="3" fill="none" stroke="#888" stroke-width="0.8"/><path d="M2,13 V10 H15 V13 M8.5,7 V10 M5,15.5 H12 V12" fill="none" stroke="#555" stroke-width="1"/><rect x="0.5" y="12" width="3.5" height="3.5" fill="#3a87c8"/><rect x="5" y="12" width="3" height="3" fill="#2a9a3a"/><rect x="9" y="12" width="3" height="3" fill="#e06030"/><rect x="13" y="12" width="3.5" height="3.5" fill="#d0107a"/></svg>
<div class="t" style="left:85px;top:384px;font-size:11.6px;color:#111;">Multiphysics</div>
<svg style="left:63px;top:400px" width="17" height="15" viewBox="0 0 17 15"><path d="M8.5,1 L16,14 L1,14 Z" fill="#d8d8d8" stroke="#888" stroke-width="1.1"/><path d="M4.75,7.5 H12.25 M2.9,10.75 H14.1 M8.5,14 L12.25,7.5 M8.5,14 L4.75,7.5 M4.75,14 L10.4,4.25 M12.25,14 L6.6,4.25" stroke="#999" stroke-width="0.6" fill="none"/></svg>
<div class="t" style="left:85px;top:402px;font-size:11.6px;color:#111;">Mesh 1</div>
<svg style="left:27px;top:422px" width="9" height="6" viewBox="0 0 9 6"><path d="M0.8,0.8 L4.5,4.5 L8.2,0.8" fill="none" stroke="#222" stroke-width="1.2"/></svg>
<svg style="left:42px;top:420px" width="18" height="10" viewBox="0 0 18 10"><path d="M0.5,4 C2,0.5 4,1 6,5" fill="none" stroke="#1e9cb0" stroke-width="1.1"/><circle cx="8.5" cy="5.5" r="2.8" fill="none" stroke="#1e9cb0" stroke-width="1.1"/><circle cx="14.5" cy="5" r="2.8" fill="none" stroke="#1e9cb0" stroke-width="1.1"/><path d="M11.3,5 Q11.7,4 12,4.5 M13,1.5 Q15,1 17,3" fill="none" stroke="#1e9cb0" stroke-width="1"/></svg>
<div class="t" style="left:64px;top:420px;font-size:11.6px;color:#111;">Study 1</div>
<svg style="left:63px;top:435px" width="17" height="17" viewBox="0 0 17 17"><path d="M1.5,1 V15.5 H16" fill="none" stroke="#777" stroke-width="1"/><path d="M0,3 L1.5,0.5 L3,3 M14,14 L16.5,15.5 L14,17" fill="none" stroke="#777" stroke-width="0.8"/><path d="M4,4.5 H15.5" stroke="#888" stroke-width="1"/><path d="M3.5,12.5 C5.5,8 9,6.5 15.5,6.5" fill="none" stroke="#1e9cb0" stroke-width="1.3"/></svg>
<div class="t" style="left:85px;top:438px;font-size:11.6px;color:#111;">Step 1: Stationary</div>
<svg style="left:48px;top:458px" width="9" height="6" viewBox="0 0 9 6"><path d="M0.8,0.8 L4.5,4.5 L8.2,0.8" fill="none" stroke="#222" stroke-width="1.2"/></svg>
<svg style="left:63px;top:453px" width="17" height="17" viewBox="0 0 17 17"><path d="M1,2 V16 M4.5,5 V16 M8,8 V16 M11.5,11 V16" stroke="#777" stroke-width="1"/><rect x="1" y="1" width="3" height="3" fill="#1e9cb0"/><rect x="4.5" y="4" width="3" height="3" fill="#1e9cb0"/><rect x="8" y="7" width="3" height="3" fill="#1e9cb0"/><rect x="11.5" y="10" width="4" height="3" fill="#1e9cb0"/></svg>
<div class="t" style="left:85px;top:456px;font-size:11.6px;color:#111;">Solver Configurations</div>
<svg style="left:68px;top:476px" width="9" height="6" viewBox="0 0 9 6"><path d="M0.8,0.8 L4.5,4.5 L8.2,0.8" fill="none" stroke="#222" stroke-width="1.2"/></svg>
<svg style="left:83px;top:471px" width="17" height="17" viewBox="0 0 17 17"><rect x="0.7" y="0.7" width="15" height="15" fill="#fff" stroke="#3aa040" stroke-width="1.2"/><rect x="2.5" y="3.5" width="3" height="3" fill="#999"/><rect x="5.5" y="6.5" width="4" height="4" fill="#999"/><rect x="9.5" y="10" width="4" height="3.5" fill="#1e9cb0"/><path d="M12,2 V8 M10.5,6.5 L12,8 L13.5,6.5" stroke="#1e9cb0" stroke-width="1" fill="none"/></svg>
<div class="t" style="left:105px;top:474px;font-size:11.6px;color:#111;">Solution 1 <i>(sol1)</i></div>
<div class="t" style="left:103px;top:489px;font-size:8px;color:#1e9cb0;letter-spacing:-0.2px">au</div><div class="t" style="left:103px;top:496px;font-size:8px;color:#1e9cb0;letter-spacing:-0.2px">at</div><svg style="left:103px;top:489px" width="17" height="17" viewBox="0 0 17 17"><path d="M0.5,8.3 H9.5" stroke="#1e9cb0" stroke-width="0.9"/><circle cx="10.8" cy="4.5" r="0.7" fill="#1e9cb0"/><circle cx="10.8" cy="7" r="0.7" fill="#1e9cb0"/><path d="M15,1.5 C13.5,1 12.8,2 12.8,3.5 V9 M11.8,4.5 H14.5" fill="none" stroke="#1e9cb0" stroke-width="1.1"/><circle cx="12.8" cy="13.3" r="2.65" fill="#888"/><rect x="12.00" y="9.90" width="1.6" height="2.04" fill="#888" transform="rotate(0 12.8 13.3)"/><rect x="12.00" y="9.90" width="1.6" height="2.04" fill="#888" transform="rotate(45 12.8 13.3)"/><rect x="12.00" y="9.90" width="1.6" height="2.04" fill="#888" transform="rotate(90 12.8 13.3)"/><rect x="12.00" y="9.90" width="1.6" height="2.04" fill="#888" transform="rotate(135 12.8 13.3)"/><rect x="12.00" y="9.90" width="1.6" height="2.04" fill="#888" transform="rotate(180 12.8 13.3)"/><rect x="12.00" y="9.90" width="1.6" height="2.04" fill="#888" transform="rotate(225 12.8 13.3)"/><rect x="12.00" y="9.90" width="1.6" height="2.04" fill="#888" transform="rotate(270 12.8 13.3)"/><rect x="12.00" y="9.90" width="1.6" height="2.04" fill="#888" transform="rotate(315 12.8 13.3)"/><circle cx="12.8" cy="13.3" r="1.09" fill="#fff"/></svg>
<div class="t" style="left:125px;top:492px;font-size:11.6px;color:#111;">Compile Equations: Stationary</div>
<svg style="left:90px;top:511px" width="6" height="9" viewBox="0 0 6 9"><path d="M0.8,0.8 L4.5,4.5 L0.8,8.2" fill="none" stroke="#555" stroke-width="1.1"/></svg>
<div class="t" style="left:103px;top:511px;font-size:9.5px;color:#1e9cb0;letter-spacing:-0.9px">u,v,w</div>
<div class="t" style="left:125px;top:510px;font-size:11.6px;color:#111;">Dependent Variables 1</div>
<svg style="left:90px;top:529px" width="6" height="9" viewBox="0 0 6 9"><path d="M0.8,0.8 L4.5,4.5 L0.8,8.2" fill="none" stroke="#555" stroke-width="1.1"/></svg>
<svg style="left:103px;top:525px" width="17" height="17" viewBox="0 0 17 17"><path d="M1.5,1 V15.5 H16" fill="none" stroke="#777" stroke-width="1"/><path d="M0,3 L1.5,0.5 L3,3 M14,14 L16.5,15.5 L14,17" fill="none" stroke="#777" stroke-width="0.8"/><path d="M4,4.5 H15.5" stroke="#888" stroke-width="1"/><path d="M3.5,12.5 C5.5,8 9,6.5 15.5,6.5" fill="none" stroke="#1e9cb0" stroke-width="1.3"/><circle cx="12.5" cy="13.5" r="2.65" fill="#888"/><rect x="11.70" y="10.10" width="1.6" height="2.04" fill="#888" transform="rotate(0 12.5 13.5)"/><rect x="11.70" y="10.10" width="1.6" height="2.04" fill="#888" transform="rotate(45 12.5 13.5)"/><rect x="11.70" y="10.10" width="1.6" height="2.04" fill="#888" transform="rotate(90 12.5 13.5)"/><rect x="11.70" y="10.10" width="1.6" height="2.04" fill="#888" transform="rotate(135 12.5 13.5)"/><rect x="11.70" y="10.10" width="1.6" height="2.04" fill="#888" transform="rotate(180 12.5 13.5)"/><rect x="11.70" y="10.10" width="1.6" height="2.04" fill="#888" transform="rotate(225 12.5 13.5)"/><rect x="11.70" y="10.10" width="1.6" height="2.04" fill="#888" transform="rotate(270 12.5 13.5)"/><rect x="11.70" y="10.10" width="1.6" height="2.04" fill="#888" transform="rotate(315 12.5 13.5)"/><circle cx="12.5" cy="13.5" r="1.09" fill="#fff"/></svg>
<div class="t" style="left:125px;top:528px;font-size:11.6px;color:#111;">Stationary Solver 1</div>
<svg style="left:27px;top:548px" width="9" height="6" viewBox="0 0 9 6"><path d="M0.8,0.8 L4.5,4.5 L8.2,0.8" fill="none" stroke="#222" stroke-width="1.2"/></svg>
<svg style="left:42px;top:546px" width="18" height="10" viewBox="0 0 18 10"><path d="M0.5,4 C2,0.5 4,1 6,5" fill="none" stroke="#1e9cb0" stroke-width="1.1"/><circle cx="8.5" cy="5.5" r="2.8" fill="none" stroke="#1e9cb0" stroke-width="1.1"/><circle cx="14.5" cy="5" r="2.8" fill="none" stroke="#1e9cb0" stroke-width="1.1"/><path d="M11.3,5 Q11.7,4 12,4.5 M13,1.5 Q15,1 17,3" fill="none" stroke="#1e9cb0" stroke-width="1"/></svg>
<div class="t" style="left:64px;top:546px;font-size:11.6px;color:#111;">Study 2</div>
<svg style="left:63px;top:561px" width="17" height="17" viewBox="0 0 17 17"><path d="M1.5,1 V9" stroke="#777" stroke-width="1"/><path d="M0,3 L1.5,0.5 L3,3" fill="none" stroke="#777" stroke-width="0.8"/><path d="M4,8 C6,2 11,2 15,8" fill="none" stroke="#1e9cb0" stroke-width="1.1"/><ellipse cx="9" cy="6.5" rx="2" ry="1.2" fill="#1e9cb0"/><rect x="1" y="11" width="7" height="4.5" rx="2.2" fill="none" stroke="#1e9cb0" stroke-width="1.1"/><rect x="9" y="11" width="7" height="4.5" rx="2.2" fill="none" stroke="#1e9cb0" stroke-width="1.1"/><path d="M5,13.2 H12" stroke="#1e9cb0" stroke-width="1.1"/></svg>
<div class="t" style="left:85px;top:564px;font-size:11.6px;color:#111;">Step 1: Bidirectionally Coupled Particle Tracing</div>
<svg style="left:50px;top:583px" width="6" height="9" viewBox="0 0 6 9"><path d="M0.8,0.8 L4.5,4.5 L0.8,8.2" fill="none" stroke="#555" stroke-width="1.1"/></svg>
<svg style="left:63px;top:579px" width="17" height="17" viewBox="0 0 17 17"><path d="M1,2 V16 M4.5,5 V16 M8,8 V16 M11.5,11 V16" stroke="#777" stroke-width="1"/><rect x="1" y="1" width="3" height="3" fill="#1e9cb0"/><rect x="4.5" y="4" width="3" height="3" fill="#1e9cb0"/><rect x="8" y="7" width="3" height="3" fill="#1e9cb0"/><rect x="11.5" y="10" width="4" height="3" fill="#1e9cb0"/></svg>
<div class="t" style="left:85px;top:582px;font-size:11.6px;color:#111;">Solver Configurations</div>
<svg style="left:27px;top:602px" width="9" height="6" viewBox="0 0 9 6"><path d="M0.8,0.8 L4.5,4.5 L8.2,0.8" fill="none" stroke="#222" stroke-width="1.2"/></svg>
<svg style="left:42px;top:597px" width="17" height="17" viewBox="0 0 17 17"><path d="M1,9 L3,7 V14 L1,16 Z" fill="#999"/><rect x="3" y="13" width="13" height="3" fill="#eee" stroke="#999" stroke-width="0.8"/><rect x="3.5" y="1.5" width="10" height="9" fill="#fff" stroke="#999" stroke-width="0.8"/><rect x="5.5" y="3.5" width="10" height="9" fill="#fff" stroke="#999" stroke-width="0.8"/><rect x="7.5" y="5.5" width="6" height="5" fill="#b04fa0"/></svg>
<div class="t" style="left:64px;top:600px;font-size:11.6px;color:#111;">Results</div>
<svg style="left:50px;top:619px" width="6" height="9" viewBox="0 0 6 9"><path d="M0.8,0.8 L4.5,4.5 L0.8,8.2" fill="none" stroke="#555" stroke-width="1.1"/></svg>
<svg style="left:63px;top:615px" width="17" height="17" viewBox="0 0 17 17"><rect x="2" y="1.0" width="1.3" height="1.3" fill="#b04fa0"/><rect x="2" y="3.6" width="1.3" height="1.3" fill="#b04fa0"/><rect x="2" y="6.2" width="1.3" height="1.3" fill="#b04fa0"/><rect x="2" y="8.8" width="1.3" height="1.3" fill="#b04fa0"/><rect x="2" y="11.4" width="1.3" height="1.3" fill="#b04fa0"/><rect x="2" y="14.0" width="1.3" height="1.3" fill="#b04fa0"/><rect x="5" y="1.0" width="1.3" height="1.3" fill="#b04fa0"/><rect x="5" y="3.6" width="1.3" height="1.3" fill="#b04fa0"/><rect x="5" y="6.2" width="1.3" height="1.3" fill="#b04fa0"/><rect x="5" y="8.8" width="1.3" height="1.3" fill="#b04fa0"/><rect x="5" y="11.4" width="1.3" height="1.3" fill="#b04fa0"/><rect x="5" y="14.0" width="1.3" height="1.3" fill="#b04fa0"/><rect x="8" y="1.0" width="1.3" height="1.3" fill="#b04fa0"/><rect x="8" y="3.6" width="1.3" height="1.3" fill="#b04fa0"/><rect x="8" y="6.2" width="1.3" height="1.3" fill="#b04fa0"/><rect x="8" y="8.8" width="1.3" height="1.3" fill="#b04fa0"/><rect x="8" y="11.4" width="1.3" height="1.3" fill="#b04fa0"/><rect x="8" y="14.0" width="1.3" height="1.3" fill="#b04fa0"/><rect x="11" y="1.0" width="1.3" height="1.3" fill="#b04fa0"/><rect x="11" y="3.6" width="1.3" height="1.3" fill="#b04fa0"/><rect x="11" y="6.2" width="1.3" height="1.3" fill="#b04fa0"/><rect x="11" y="8.8" width="1.3" height="1.3" fill="#b04fa0"/><rect x="11" y="11.4" width="1.3" height="1.3" fill="#b04fa0"/><rect x="11" y="14.0" width="1.3" height="1.3" fill="#b04fa0"/></svg>
<div class="t" style="left:85px;top:618px;font-size:11.6px;color:#111;">Datasets</div>
<svg style="left:48px;top:638px" width="9" height="6" viewBox="0 0 9 6"><path d="M0.8,0.8 L4.5,4.5 L8.2,0.8" fill="none" stroke="#222" stroke-width="1.2"/></svg>
<div class="t" style="left:63px;top:633px;font-size:8px;color:#b04fa0;letter-spacing:-0.4px">8.85</div><div class="t" style="left:63px;top:640px;font-size:8px;color:#b04fa0;letter-spacing:-0.4px">e-12</div>
<div class="t" style="left:85px;top:636px;font-size:11.6px;color:#111;">Derived Values</div>
<div class="t" style="left:86px;top:656px;font-size:7.5px;color:#3aa040;font-weight:bold;letter-spacing:-0.3px">AV</div>
<div class="t" style="left:105px;top:654px;font-size:11.6px;color:#111;">Surface Average 1</div>
<svg style="left:48px;top:674px" width="9" height="6" viewBox="0 0 9 6"><path d="M0.8,0.8 L4.5,4.5 L8.2,0.8" fill="none" stroke="#222" stroke-width="1.2"/></svg>
<svg style="left:64px;top:670px" width="15" height="14" viewBox="0 0 15 14"><rect x="0.7" y="0.7" width="12.6" height="12.6" fill="#fff" stroke="#b04fa0" stroke-width="1.2"/><rect x="1" y="3.7" width="3.5" height="3" fill="#e8cce2"/><rect x="5" y="3.7" width="3.5" height="3" fill="#e8cce2"/><path d="M0.7,3.7 H13.3 M0.7,6.8 H13.3 M0.7,9.9 H13.3 M4.8,0.7 V13.3 M9,0.7 V13.3" stroke="#b04fa0" stroke-width="1.1"/></svg>
<div class="t" style="left:85px;top:672px;font-size:11.6px;color:#111;">Tables</div>
<svg style="left:84px;top:688px" width="15" height="14" viewBox="0 0 15 14"><rect x="0.7" y="0.7" width="12.6" height="12.6" fill="#fff" stroke="#b04fa0" stroke-width="1.2"/><rect x="1" y="3.7" width="3.5" height="3" fill="#e8cce2"/><rect x="5" y="3.7" width="3.5" height="3" fill="#e8cce2"/><path d="M0.7,3.7 H13.3 M0.7,6.8 H13.3 M0.7,9.9 H13.3 M4.8,0.7 V13.3 M9,0.7 V13.3" stroke="#b04fa0" stroke-width="1.1"/></svg>
<div class="t" style="left:105px;top:690px;font-size:11.6px;color:#111;">Table 1</div>
<svg style="left:50px;top:709px" width="6" height="9" viewBox="0 0 6 9"><path d="M0.8,0.8 L4.5,4.5 L0.8,8.2" fill="none" stroke="#555" stroke-width="1.1"/></svg>
<div class="a" style="left:64px;top:706px;width:14px;height:14px;background:#b04fa0"></div>
<div class="t" style="left:85px;top:708px;font-size:11.6px;color:#111;">Velocity (spf)</div>
<svg style="left:48px;top:728px" width="9" height="6" viewBox="0 0 9 6"><path d="M0.8,0.8 L4.5,4.5 L8.2,0.8" fill="none" stroke="#222" stroke-width="1.2"/></svg>
<div class="a" style="left:64px;top:724px;width:14px;height:14px;background:#b04fa0"></div><div class="a" style="left:73px;top:723px;width:7px;height:7px;background:#fff;border-radius:0 0 0 7px"></div><svg style="left:73px;top:722px" width="8" height="8" viewBox="0 0 8 8"><path d="M4,0.7999999999999998 V7.2 M1.23,2.40 L6.77,5.60 M1.23,5.60 L6.77,2.40" stroke="#777" stroke-width="1.2"/></svg>
<div class="t" style="left:85px;top:726px;font-size:11.6px;color:#111;">Pressure (spf)</div>
<svg style="left:83px;top:741px" width="17" height="17" viewBox="0 0 17 17"><path d="M3,3 C6,0 13,1 15,6 C17,11 14,16 9,16 C5,16 6,12 4,10 C1,8 0,5 3,3 Z" fill="none" stroke="#b04fa0" stroke-width="1.1"/><path d="M5,5 C7,3 11,4 12.5,7 C14,10 12,13.5 9.5,13.5 C7,13.5 8,11 6.5,9.5 C4.5,8 3.5,6.5 5,5 Z" fill="none" stroke="#b04fa0" stroke-width="1"/><path d="M7.5,7 C9,6.5 10.5,8 10.5,9.5 C10.5,11 9,11.5 8.5,10.5 C8,9.5 6.5,8 7.5,7 Z" fill="none" stroke="#b04fa0" stroke-width="0.9"/></svg><div class="a" style="left:93px;top:740px;width:8px;height:7px;background:#fff;border-radius:50%"></div><svg style="left:93px;top:740px" width="8" height="8" viewBox="0 0 8 8"><path d="M4,0.7999999999999998 V7.2 M1.23,2.40 L6.77,5.60 M1.23,5.60 L6.77,2.40" stroke="#777" stroke-width="1.2"/></svg>
<div class="t" style="left:105px;top:744px;font-size:11.6px;color:#111;">Contour</div>
<svg style="left:48px;top:764px" width="9" height="6" viewBox="0 0 9 6"><path d="M0.8,0.8 L4.5,4.5 L8.2,0.8" fill="none" stroke="#222" stroke-width="1.2"/></svg>
<div class="a" style="left:64px;top:760px;width:14px;height:14px;background:#b04fa0"></div>
<div class="t" style="left:85px;top:762px;font-size:11.6px;color:#111;">Velocity (spf) 1</div>
<div class="a" style="left:84px;top:778px;width:14px;height:14px;background:#b04fa0"></div>
<div class="t" style="left:105px;top:780px;font-size:11.6px;color:#111;">Surface</div>
<svg style="left:50px;top:799px" width="6" height="9" viewBox="0 0 6 9"><path d="M0.8,0.8 L4.5,4.5 L0.8,8.2" fill="none" stroke="#555" stroke-width="1.1"/></svg>
<div class="a" style="left:64px;top:796px;width:14px;height:14px;background:#b04fa0"></div>
<div class="t" style="left:85px;top:798px;font-size:11.6px;color:#111;">Pressure (spf) 1</div>
<svg style="left:48px;top:818px" width="9" height="6" viewBox="0 0 9 6"><path d="M0.8,0.8 L4.5,4.5 L8.2,0.8" fill="none" stroke="#222" stroke-width="1.2"/></svg>
<div class="a" style="left:64px;top:814px;width:14px;height:14px;background:#b04fa0"></div>
<div class="t" style="left:85px;top:816px;font-size:11.6px;color:#111;">Particle Trajectories (fpt)</div>
<svg style="left:68px;top:836px" width="9" height="6" viewBox="0 0 9 6"><path d="M0.8,0.8 L4.5,4.5 L8.2,0.8" fill="none" stroke="#222" stroke-width="1.2"/></svg>
<svg style="left:83px;top:831px" width="17" height="17" viewBox="0 0 17 17"><circle cx="13" cy="3" r="2" fill="#b04fa0"/><circle cx="4" cy="6.5" r="2" fill="#b04fa0"/><circle cx="9" cy="9" r="2" fill="#b04fa0"/><circle cx="4" cy="12" r="2" fill="#b04fa0"/><circle cx="13" cy="14.5" r="2" fill="#b04fa0"/><path d="M4,6.5 L13,3 M9,9 L13,14.5 M4,12 L9,9" stroke="#b04fa0" stroke-width="0.6" opacity="0.5"/></svg>
<div class="t" style="left:105px;top:834px;font-size:11.6px;color:#111;">Particle Trajectories 1</div>
<svg style="left:103px;top:849px" width="17" height="17" viewBox="0 0 17 17"><path d="M8,1.5 C13,1.5 16,5 15.5,9 C15,13 11,16 7,15.5 C3,15 1,12 1.5,8 C2,4 4,1.5 8,1.5 Z" fill="#e0e0e0" stroke="#777" stroke-width="1"/><circle cx="6" cy="5.5" r="1.8" fill="#fff" stroke="#777" stroke-width="0.8"/><circle cx="11" cy="5" r="1.1" fill="#3a87c8"/><circle cx="12.5" cy="8.5" r="1.1" fill="#2a9a3a"/><circle cx="11" cy="12" r="1.1" fill="#e06030"/><circle cx="7" cy="12.5" r="1.1" fill="#d0107a"/></svg>
<div class="t" style="left:125px;top:852px;font-size:11.6px;color:#111;">Color Expression 1</div>
<svg style="left:83px;top:867px" width="17" height="17" viewBox="0 0 17 17"><rect x="0.7" y="0.7" width="15" height="15" fill="#f0f0f0" stroke="#999" stroke-width="1"/><path d="M3.5,2.5 V13 H14" fill="none" stroke="#777" stroke-width="0.9"/><text x="9" y="8" font-size="6.5" fill="#888" font-family="Liberation Sans" text-anchor="middle">Yx</text></svg>
<div class="t" style="left:105px;top:870px;font-size:11.6px;color:#111;">Coordinate System Surface 1</div>
<div class="a" style="left:64px;top:886px;width:14px;height:14px;background:#b04fa0"></div>
<div class="t" style="left:85px;top:888px;font-size:11.6px;color:#111;">2D Plot Group 6</div>
<svg style="left:48px;top:908px" width="9" height="6" viewBox="0 0 9 6"><path d="M0.8,0.8 L4.5,4.5 L8.2,0.8" fill="none" stroke="#222" stroke-width="1.2"/></svg>
<svg style="left:62px;top:903px" width="18" height="17" viewBox="0 0 18 17"><path d="M2,4 H14 L16,6 V15 H2 Z" fill="#fff" stroke="#b04fa0" stroke-width="1.1"/><path d="M1,2 H13 M1,2 V12" stroke="#b04fa0" stroke-width="1"/><rect x="4" y="8" width="10" height="5" fill="none" stroke="#b04fa0" stroke-width="1"/><path d="M6,10.5 H12" stroke="#b04fa0" stroke-width="0.8"/></svg>
<div class="t" style="left:85px;top:906px;font-size:11.6px;color:#111;">Export</div>
<svg style="left:83px;top:921px" width="17" height="17" viewBox="0 0 17 17"><rect x="0.7" y="1.7" width="13" height="13" fill="#fff" stroke="#888" stroke-width="1.1"/><rect x="3" y="5" width="6" height="7" fill="#b04fa0"/><path d="M9,8.5 H16 M13.5,6 L16,8.5 L13.5,11" fill="none" stroke="#b04fa0" stroke-width="1.3"/></svg>
<div class="t" style="left:105px;top:924px;font-size:11.6px;color:#111;">Plot 1</div>
<svg style="left:63px;top:939px" width="17" height="17" viewBox="0 0 17 17"><rect x="1.7" y="2.7" width="11" height="13" fill="#fff" stroke="#b04fa0" stroke-width="1.1"/><path d="M3.5,5.5 H7 M3.5,8 H6 M3.5,10.5 H5.5" stroke="#b04fa0" stroke-width="0.9"/><path d="M5,13.5 L6,10.5 L14.5,2 L16,3.5 L7.5,12 Z" fill="#b04fa0"/></svg>
<div class="t" style="left:85px;top:942px;font-size:11.6px;color:#111;">Reports</div>
<div class="a" style="left:390px;top:237px;width:17px;height:729px;background:#f8f8f8"></div>
<div class="a" style="left:391px;top:494px;width:15px;height:453px;background:#dadada"></div>
<svg style="left:394px;top:242px" width="9" height="6" viewBox="0 0 9 6"><path d="M0.8,5 L4.5,1 L8.2,5" fill="none" stroke="#c8c8c8" stroke-width="1"/></svg>
<svg style="left:394px;top:952px" width="9" height="6" viewBox="0 0 9 6"><path d="M0.8,1 L4.5,5 L8.2,1" fill="none" stroke="#c8c8c8" stroke-width="1"/></svg>
<div class="a" style="left:4px;top:965px;width:386px;height:17px;background:#f9f9f9"></div>
<div class="a" style="left:20px;top:965px;width:333px;height:17px;background:#e3e3e3"></div>
<svg style="left:9px;top:969px" width="6" height="9" viewBox="0 0 6 9"><path d="M5,0.8 L1,4.5 L5,8.2" fill="none" stroke="#c0c0c0" stroke-width="1"/></svg>
<svg style="left:377px;top:969px" width="6" height="9" viewBox="0 0 6 9"><path d="M1,0.8 L5,4.5 L1,8.2" fill="none" stroke="#a0a0a0" stroke-width="1"/></svg>
<div class="a" style="left:420px;top:182px;width:937px;height:1px;background:#d5d5d5"></div>
<div class="a" style="left:424px;top:159px;width:61px;height:24px;background:#f8f9fc;border:1px solid #d3d3d3;border-bottom:none"></div>
<div class="t" style="left:429px;top:166px;font-size:13px;color:#2a5da8;">Graphics</div>
<div class="a" style="left:493px;top:159px;width:141px;height:23px;background:#ebebeb"></div>
<div class="t" style="left:497px;top:165px;font-size:13px;color:#111;">Convergence Plot 1</div>
<svg style="left:618px;top:166px" width="9" height="9" viewBox="0 0 9 9"><path d="M0.5,0.5 L8.5,8.5 M8.5,0.5 L0.5,8.5" stroke="#b9c3d0" stroke-width="1.1"/></svg>
<div class="a" style="left:642px;top:159px;width:141px;height:23px;background:#ebebeb"></div>
<div class="t" style="left:646px;top:165px;font-size:13px;color:#111;">Convergence Plot 2</div>
<svg style="left:767px;top:166px" width="9" height="9" viewBox="0 0 9 9"><path d="M0.5,0.5 L8.5,8.5 M8.5,0.5 L0.5,8.5" stroke="#b9c3d0" stroke-width="1.1"/></svg>
<div class="a" style="left:1330px;top:170px;width:0;height:0;border-left:4px solid transparent;border-right:4px solid transparent;border-top:4px solid #444"></div>
<svg style="left:1346px;top:166px" width="7" height="12" viewBox="0 0 7 12"><path d="M1,0 H6 V6 H7 V7 H0 V6 H1 Z" fill="#555"/><path d="M3.5,7 V12" stroke="#555" stroke-width="1.2"/></svg>
<svg style="left:428px;top:192px" width="14" height="14" viewBox="0 0 14 14"><circle cx="5.5" cy="5.5" r="4.7" fill="none" stroke="#3a87c8" stroke-width="1.5"/><path d="M9,9 L13,13" stroke="#3a87c8" stroke-width="2"/><path d="M3,5.5 H8 M5.5,3 V8" stroke="#3a87c8" stroke-width="1.3"/></svg>
<svg style="left:451px;top:192px" width="14" height="14" viewBox="0 0 14 14"><circle cx="5.5" cy="5.5" r="4.7" fill="none" stroke="#3a87c8" stroke-width="1.5"/><path d="M9,9 L13,13" stroke="#3a87c8" stroke-width="2"/><path d="M3,5.5 H8" stroke="#3a87c8" stroke-width="1.3"/></svg>
<svg style="left:473px;top:192px" width="17" height="14" viewBox="0 0 17 14"><rect x="0.5" y="5.5" width="8" height="7" fill="none" stroke="#3a87c8" stroke-width="1" stroke-dasharray="2,1"/><g transform="translate(3,0)"><circle cx="5.5" cy="5.5" r="4.7" fill="none" stroke="#3a87c8" stroke-width="1.5"/><path d="M9,9 L13,13" stroke="#3a87c8" stroke-width="2"/><path d="M3,5.5 H8 M5.5,3 V8" stroke="#3a87c8" stroke-width="1.3"/></g></svg>
<div class="a" style="left:497px;top:196px;width:0;height:0;border-left:3px solid transparent;border-right:3px solid transparent;border-top:3px solid #111"></div>
<svg style="left:514px;top:191px" width="16" height="16" viewBox="0 0 16 16"><rect x="4" y="4" width="8" height="8" fill="#fff" stroke="#888" stroke-width="1"/><path d="M8,5.5 V10.5 M5.5,8 H10.5" stroke="#888" stroke-width="1"/><path d="M8,0 L6.5,2 H9.5 Z M8,16 L6.5,14 H9.5 Z M0,8 L2,6.5 V9.5 Z M16,8 L14,6.5 V9.5 Z" fill="#3a87c8"/></svg>
<svg style="left:537px;top:190px" width="16" height="16" viewBox="0 0 16 16"><rect x="0.5" y="0.5" width="15" height="15" fill="#fff" stroke="#777" stroke-width="1"/><path d="M8,5 V11 M5,8 H11" stroke="#777" stroke-width="1"/><path d="M8,1.5 L6,4 H10 Z M8,14.5 L6,12 H10 Z M1.5,8 L4,6 V10 Z M14.5,8 L12,6 V10 Z" fill="#3a87c8"/></svg>
<div class="a" style="left:561px;top:190px;width:1px;height:16px;background:#d8d8d8"></div>
<div class="a" style="left:609px;top:190px;width:1px;height:16px;background:#d8d8d8"></div>
<div class="a" style="left:658px;top:190px;width:1px;height:16px;background:#d8d8d8"></div>
<div class="a" style="left:794px;top:190px;width:1px;height:16px;background:#d8d8d8"></div>
<div class="a" style="left:889px;top:190px;width:1px;height:16px;background:#d8d8d8"></div>
<div class="a" style="left:920px;top:190px;width:1px;height:16px;background:#d8d8d8"></div>
<div class="a" style="left:991px;top:190px;width:1px;height:16px;background:#d8d8d8"></div>
<svg style="left:567px;top:191px" width="18" height="15" viewBox="0 0 18 15"><path d="M7.5,12 V1" stroke="#3a87c8" stroke-width="1.2"/><path d="M7.5,0 L6,3 H9 Z" fill="#3a87c8"/><path d="M7.5,12 L1,6" stroke="#2aa040" stroke-width="1.2"/><path d="M7.5,12 L17,7" stroke="#d02060" stroke-width="1.2"/></svg>
<div class="a" style="left:590px;top:196px;width:0;height:0;border-left:3px solid transparent;border-right:3px solid transparent;border-top:3px solid #111"></div>
<div class="a" style="left:617px;top:192px;width:16px;height:11px;background:#3a87c8;border-radius:4px"></div>
<div class="a" style="left:640px;top:196px;width:0;height:0;border-left:3px solid transparent;border-right:3px solid transparent;border-top:3px solid #111"></div>
<svg style="left:666px;top:191px" width="17" height="15" viewBox="0 0 17 15"><rect x="0.5" y="4.5" width="16" height="10" rx="3" fill="#dcdcdc" stroke="#999"/><path d="M0.5,10 H16.5" stroke="#999"/><rect x="4.5" y="0.5" width="8" height="6" fill="#fff" stroke="#3a87c8" stroke-dasharray="1.5,1"/><rect x="6" y="2" width="5" height="3" fill="#3a87c8"/></svg>
<div class="a" style="left:690px;top:196px;width:0;height:0;border-left:3px solid transparent;border-right:3px solid transparent;border-top:3px solid #111"></div>
<svg style="left:707px;top:191px" width="17" height="15" viewBox="0 0 17 15"><rect x="0.5" y="4.5" width="16" height="10" rx="3" fill="#3a87c8"/><rect x="4.5" y="0.5" width="8" height="6" fill="#fff" stroke="#fff" stroke-dasharray="1.5,1"/><rect x="5" y="1" width="7" height="5" fill="none" stroke="#3a87c8" stroke-width="0.8" stroke-dasharray="1.5,1"/></svg>
<div class="a" style="left:729px;top:196px;width:0;height:0;border-left:3px solid transparent;border-right:3px solid transparent;border-top:3px solid #111"></div>
<svg style="left:748px;top:191px" width="17" height="15" viewBox="0 0 17 15"><rect x="0.7" y="0.7" width="13" height="12" fill="none" stroke="#3a87c8" stroke-width="1.3" stroke-dasharray="2.5,1.5"/><path d="M6,5 L14,10 L11,11 L14,14 L12.5,15 L9.5,12 L7,14 Z" fill="#3a6fb0"/></svg>
<svg style="left:771px;top:191px" width="16" height="15" viewBox="0 0 16 15"><rect x="0.7" y="0.7" width="13" height="12" fill="none" stroke="#3a87c8" stroke-width="1.3" stroke-dasharray="2.5,1.5"/><path d="M1,0 L6,7" stroke="#777" stroke-width="1.2"/><path d="M4,7 L9,6 L10,13 L5,13 Z" fill="#f0a040"/></svg>
<svg style="left:801px;top:193px" width="16" height="12" viewBox="0 0 16 12"><path d="M1,6 Q8,0 15,6 Q8,12 1,6 Z" fill="none" stroke="#3a87c8" stroke-width="1.5"/><circle cx="8" cy="6" r="2" fill="#3a87c8"/><path d="M2,11 L14,1" stroke="#3a87c8" stroke-width="1.5"/></svg>
<svg style="left:825px;top:190px" width="17" height="17" viewBox="0 0 17 17"><path d="M4,6 A4,4 0 1 1 9,9 V10" fill="none" stroke="#3a87c8" stroke-width="1.4"/><path d="M2,4 L5,7 L6,3 Z" fill="#3a87c8"/><ellipse cx="4" cy="14" rx="3.5" ry="2" fill="none" stroke="#3a87c8" stroke-width="1.2"/><ellipse cx="12.5" cy="14" rx="3.5" ry="2" fill="none" stroke="#3a87c8" stroke-width="1.2"/></svg>
<svg style="left:848px;top:192px" width="17" height="14" viewBox="0 0 17 14"><rect x="0.7" y="0.7" width="15.5" height="12.5" fill="#fff" stroke="#3a87c8" stroke-width="1.3"/><path d="M0.7,3 H16" stroke="#3a87c8" stroke-width="1"/><path d="M3,8 Q8.5,4 14,8 Q8.5,12 3,8 Z" fill="#3a87c8"/><circle cx="8.5" cy="8" r="1.3" fill="#fff"/></svg>
<div class="a" style="left:871px;top:196px;width:0;height:0;border-left:3px solid transparent;border-right:3px solid transparent;border-top:3px solid #111"></div>
<div class="a" style="left:895px;top:188px;width:20px;height:20px;background:#b8dcf8;border:1px solid #3a9ae8;border-radius:3px"></div>
<svg style="left:898px;top:191px" width="15" height="15" viewBox="0 0 15 15"><rect x="0.6" y="0.6" width="13.8" height="13.8" fill="#4d8bcb" stroke="#2a5a98" stroke-width="1.2"/><rect x="2.3" y="2.3" width="2.6" height="2.6" fill="#fff"/><rect x="2.3" y="5.9" width="2.6" height="2.6" fill="#fff"/><rect x="2.3" y="9.5" width="2.6" height="2.6" fill="#fff"/><rect x="5.9" y="2.3" width="2.6" height="2.6" fill="#fff"/><rect x="5.9" y="5.9" width="2.6" height="2.6" fill="#fff"/><rect x="5.9" y="9.5" width="2.6" height="2.6" fill="#fff"/><rect x="9.5" y="2.3" width="2.6" height="2.6" fill="#fff"/><rect x="9.5" y="5.9" width="2.6" height="2.6" fill="#fff"/><rect x="9.5" y="9.5" width="2.6" height="2.6" fill="#fff"/></svg>
<svg style="left:928px;top:190px" width="16" height="16" viewBox="0 0 16 16"><path d="M1,2 L4,0 H14 V5 H1 Z" fill="#ccc" stroke="#999" stroke-width="0.8"/><rect x="3" y="3" width="11" height="4" fill="#5aa8e0"/><circle cx="9" cy="11.5" r="3.6" fill="#fff" stroke="#d02050" stroke-width="1.3"/><path d="M6.5,14 L11.5,9" stroke="#d02050" stroke-width="1.3"/></svg>
<svg style="left:951px;top:191px" width="16" height="16" viewBox="0 0 16 16"><path d="M8,1 C13,1 15.5,4.5 15,8.5 C14.5,12.5 11,15 7,14.5 C3,14 1,11 1.5,7.5 C2,4 4,1 8,1 Z" fill="#c8c8c8" stroke="#666" stroke-width="1.1"/><circle cx="6" cy="5" r="2" fill="#fff" stroke="#666" stroke-width="0.9"/><circle cx="11" cy="4.5" r="1.1" fill="#3a87c8"/><circle cx="12.5" cy="8" r="1.1" fill="#2a9a3a"/><circle cx="10.5" cy="11.5" r="1.1" fill="#e06030"/><circle cx="6.5" cy="11.5" r="1.1" fill="#d0107a"/></svg>
<div class="a" style="left:975px;top:196px;width:0;height:0;border-left:3px solid transparent;border-right:3px solid transparent;border-top:3px solid #111"></div>
<svg style="left:1000px;top:191px" width="16" height="16" viewBox="0 0 16 16"><circle cx="8" cy="8" r="7.2" fill="#3a87c8"/><circle cx="8" cy="8" r="3" fill="#fff"/><path d="M8,0.8 L10,5 M15.2,8 L11,10 M8,15.2 L6,11 M0.8,8 L5,6 M3,3 L6.5,5.5 M13,13 L9.5,10.5 M13,3 L10.5,6.5 M3,13 L5.5,9.5" stroke="#fff" stroke-width="1.2"/></svg>
<div class="a" style="left:1022px;top:196px;width:0;height:0;border-left:3px solid transparent;border-right:3px solid transparent;border-top:3px solid #111"></div>
<svg style="left:1040px;top:192px" width="17" height="13" viewBox="0 0 17 13"><path d="M0,3 H4 L6,0.5 H11 L13,3 H17 V13 H0 Z" fill="#3a87c8"/><circle cx="8.5" cy="7.5" r="3.2" fill="#fff"/><circle cx="8.5" cy="7.5" r="2" fill="#3a87c8"/></svg>
<svg style="left:1063px;top:190px" width="18" height="17" viewBox="0 0 18 17"><rect x="3.7" y="0.7" width="10" height="5" fill="#fff" stroke="#3a87c8" stroke-width="1.3"/><rect x="0.7" y="4.7" width="16.6" height="7.5" rx="2" fill="#cfe3f5" stroke="#3a87c8" stroke-width="1.3"/><rect x="3.7" y="9.7" width="10" height="6.6" fill="#fff" stroke="#3a87c8" stroke-width="1.3"/><path d="M13,7 H15" stroke="#3a87c8" stroke-width="1"/></svg>
<div class="a" style="left:420px;top:211px;width:937px;height:550px;background:#fff"></div>
<svg style="left:0;top:0" width="1912" height="1030" viewBox="0 0 1912 1030"><path d="M471,290.8 C505,279 530,274.6 560,274.6 L1348,274.6 L1348,574.8 L560,574.8 C530,574.8 505,570.5 471,558.9 Z" fill="#c8c8c8"/><path d="M471,290.8 C505,279 530,274.6 560,274.6 L1348,274.6 M471,558.9 C505,570.5 530,574.8 560,574.8 L1348,574.8" fill="none" stroke="#111" stroke-width="1.4"/><rect x="471" y="219" width="877" height="519" fill="none" stroke="#6a6a6a" stroke-width="1.8"/><path d="M538.0,211 V219 M538.0,737.5 V745.5 M638.5,211 V219 M638.5,737.5 V745.5 M738.5,211 V219 M738.5,737.5 V745.5 M839.0,211 V219 M839.0,737.5 V745.5 M939.0,211 V219 M939.0,737.5 V745.5 M1039.5,211 V219 M1039.5,737.5 V745.5 M1140.0,211 V219 M1140.0,737.5 V745.5 M1240.0,211 V219 M1240.0,737.5 V745.5 M1341,211 V219 M1341,737.5 V745.5 M463,725.9 H471 M1348,725.9 H1356 M463,675.7 H471 M1348,675.7 H1356 M463,625.5 H471 M1348,625.5 H1356 M463,575.3 H471 M1348,575.3 H1356 M463,525.1 H471 M1348,525.1 H1356 M463,474.9 H471 M1348,474.9 H1356 M463,424.7 H471 M1348,424.7 H1356 M463,374.5 H471 M1348,374.5 H1356 M463,324.2 H471 M1348,324.2 H1356 M463,274.0 H471 M1348,274.0 H1356 M463,223.8 H471 M1348,223.8 H1356" stroke="#6a6a6a" stroke-width="1.5"/><path d="M466,541.5 L471,547 L466,552.5 Z" fill="#000"/><path d="M465.5,743.5 L471,738.5 L476.5,743.5 Z" fill="#000"/><rect x="889" y="400" width="51" height="50.5" rx="1.5" fill="#b3b3f2" stroke="#0000ff" stroke-width="2"/></svg>
<div class="t" style="left:162px;width:300px;text-align:right;top:725px;font-size:13px;color:#111;">-3</div>
<div class="t" style="left:162px;width:300px;text-align:right;top:675px;font-size:13px;color:#111;">-2</div>
<div class="t" style="left:162px;width:300px;text-align:right;top:625px;font-size:13px;color:#111;">-1</div>
<div class="t" style="left:162px;width:300px;text-align:right;top:574px;font-size:13px;color:#111;">0</div>
<div class="t" style="left:162px;width:300px;text-align:right;top:524px;font-size:13px;color:#111;">1</div>
<div class="t" style="left:162px;width:300px;text-align:right;top:474px;font-size:13px;color:#111;">2</div>
<div class="t" style="left:162px;width:300px;text-align:right;top:424px;font-size:13px;color:#111;">3</div>
<div class="t" style="left:162px;width:300px;text-align:right;top:373px;font-size:13px;color:#111;">4</div>
<div class="t" style="left:162px;width:300px;text-align:right;top:323px;font-size:13px;color:#111;">5</div>
<div class="t" style="left:162px;width:300px;text-align:right;top:273px;font-size:13px;color:#111;">6</div>
<div class="t" style="left:162px;width:300px;text-align:right;top:223px;font-size:13px;color:#111;">7</div>
<div class="t" style="left:539px;top:745px;font-size:13px;color:#111;">30</div>
<div class="t" style="left:639px;top:745px;font-size:13px;color:#111;">32</div>
<div class="t" style="left:740px;top:745px;font-size:13px;color:#111;">34</div>
<div class="t" style="left:840px;top:745px;font-size:13px;color:#111;">36</div>
<div class="t" style="left:940px;top:745px;font-size:13px;color:#111;">38</div>
<div class="t" style="left:1041px;top:745px;font-size:13px;color:#111;">40</div>
<div class="t" style="left:1141px;top:745px;font-size:13px;color:#111;">42</div>
<div class="t" style="left:1241px;top:745px;font-size:13px;color:#111;">44</div>
<div class="t" style="left:476px;top:219px;font-size:13px;color:#111;">mm</div>
<div class="t" style="left:1322px;top:722px;font-size:13px;color:#111;">mm</div>
<svg style="left:1321px;top:223px" width="24" height="22" viewBox="0 0 24 22"><path d="M3,5 L19,1 L23,17 L6,21 Z" fill="#f4f4f4" stroke="#e0e0e0"/><rect x="6" y="5" width="14" height="12" rx="3" fill="#1a3a9a"/><path d="M9,7 L17,11 L9,15 Z" fill="#f0e040"/></svg>
<div class="a" style="left:1027px;top:338px;width:184px;height:249px;border-radius:8px;background:#4899ab;box-shadow:0 26px 50px rgba(0,0,0,0.30),0 4px 14px rgba(0,0,0,0.18)"></div>
<div class="a" style="left:1028px;top:369px;width:182px;height:217px;border-radius:0 0 7px 7px;background:#fff"></div>
<svg style="left:1037px;top:346px" width="14" height="14" viewBox="0 0 14 14"><circle cx="7" cy="7" r="6.8" fill="#d62b5c"/><path d="M4.3,4.3 L9.7,9.7 M9.7,4.3 L4.3,9.7" stroke="#fff" stroke-width="1.4"/></svg>
<div class="t" style="left:1057px;top:348px;font-size:12px;color:#111;">Error</div>
<svg style="left:1189px;top:348px" width="11" height="11" viewBox="0 0 11 11"><path d="M0.5,0.5 L10.5,10.5 M10.5,0.5 L0.5,10.5" stroke="#111" stroke-width="1.1"/></svg>
<div class="t" style="left:1042px;top:384px;font-size:14.8px;color:#3a8ad0;">Undefined variable.</div>
<div class="t" style="left:1042px;top:420px;font-size:11.6px;color:#111;">&nbsp;-&nbsp;Variable:&nbsp;part_count_sel</div>
<div class="t" style="left:1042px;top:435px;font-size:11.6px;color:#111;">&nbsp;-&nbsp;Geometry:&nbsp;geom1</div>
<div class="t" style="left:1042px;top:450px;font-size:11.6px;color:#111;">&nbsp;-&nbsp;Domain:&nbsp;2</div>
<div class="t" style="left:1042px;top:465px;font-size:11.6px;color:#111;">Failed&nbsp;to&nbsp;evaluate&nbsp;variable.</div>
<div class="t" style="left:1042px;top:480px;font-size:11.6px;color:#111;">&nbsp;-&nbsp;Variable:&nbsp;comp1.fpt.Nsel</div>
<div class="t" style="left:1042px;top:495px;font-size:11.6px;color:#111;">&nbsp;-&nbsp;Defined&nbsp;as:&nbsp;part_count_sel</div>
<div class="t" style="left:1042px;top:510px;font-size:11.6px;color:#111;">Failed&nbsp;to&nbsp;evaluate&nbsp;expression.</div>
<div class="t" style="left:1042px;top:525px;font-size:11.6px;color:#111;">&nbsp;-&nbsp;Expression:&nbsp;comp1.fpt.Nsel</div>
<div class="t" style="left:1042px;top:540px;font-size:11.6px;color:#111;">&nbsp;-&nbsp;Feature:&nbsp;Surface&nbsp;Average&nbsp;1</div>
<div class="t" style="left:1044px;top:564px;width:88px;overflow:hidden;font-size:12px;color:#1a66cc;text-decoration:underline">More information</div>
<div class="a" style="left:1131px;top:560px;width:70px;height:18px;background:#e1e1e1;border:1px solid #2a78d0"></div>
<div class="t" style="left:1016px;width:300px;text-align:center;top:564px;font-size:12px;color:#111;">OK</div>
<div class="a" style="left:1364px;top:182px;width:544px;height:1px;background:#d5d5d5"></div>
<div class="a" style="left:1368px;top:159px;width:56px;height:24px;background:#f8f9fc;border:1px solid #d3d3d3;border-bottom:none"></div>
<div class="t" style="left:1373px;top:166px;font-size:13px;color:#2a8ae0;">Settings</div>
<div class="a" style="left:1432px;top:159px;width:104px;height:23px;background:#ebebeb"></div>
<div class="t" style="left:1436px;top:165px;font-size:13px;color:#111;">Add Material</div>
<svg style="left:1520px;top:166px" width="9" height="9" viewBox="0 0 9 9"><path d="M0.5,0.5 L8.5,8.5 M8.5,0.5 L0.5,8.5" stroke="#b9c3d0" stroke-width="1.1"/></svg>
<div class="a" style="left:1544px;top:159px;width:97px;height:23px;background:#ebebeb"></div>
<div class="t" style="left:1548px;top:165px;font-size:13px;color:#111;">Add Physics</div>
<svg style="left:1627px;top:166px" width="9" height="9" viewBox="0 0 9 9"><path d="M0.5,0.5 L8.5,8.5 M8.5,0.5 L0.5,8.5" stroke="#b9c3d0" stroke-width="1.1"/></svg>
<div class="a" style="left:1649px;top:159px;width:88px;height:23px;background:#ebebeb"></div>
<div class="t" style="left:1653px;top:165px;font-size:13px;color:#111;">Add Study</div>
<svg style="left:1721px;top:166px" width="9" height="9" viewBox="0 0 9 9"><path d="M0.5,0.5 L8.5,8.5 M8.5,0.5 L0.5,8.5" stroke="#b9c3d0" stroke-width="1.1"/></svg>
<div class="a" style="left:1882px;top:170px;width:0;height:0;border-left:4px solid transparent;border-right:4px solid transparent;border-top:4px solid #2a8ae0"></div>
<svg style="left:1898px;top:166px" width="7" height="12" viewBox="0 0 7 12"><path d="M1,0 H6 V6 H7 V7 H0 V6 H1 Z" fill="#2a8ae0"/><path d="M3.5,7 V12" stroke="#2a8ae0" stroke-width="1.2"/></svg>
<div class="t" style="left:1370px;top:194px;font-size:14.2px;color:#3a9ae8;">Surface Average</div>
<div class="a" style="left:1375px;top:217px;width:9px;height:2px;background:#b04fa0"></div>
<div class="a" style="left:1375px;top:221px;width:9px;height:2px;background:#b04fa0"></div>
<div class="t" style="left:1391px;top:214px;font-size:12px;color:#111;">Evaluate</div>
<div class="a" style="left:1441px;top:218px;width:0;height:0;border-left:4px solid transparent;border-right:4px solid transparent;border-top:4px solid #111"></div>
<div class="a" style="left:1892px;top:233px;width:17px;height:528px;background:#f4f4f4"></div>
<div class="a" style="left:1892px;top:250px;width:17px;height:300px;background:#e3e3e3"></div>
<svg style="left:1896px;top:240px" width="9" height="6" viewBox="0 0 9 6"><path d="M0.8,5 L4.5,1 L8.2,5" fill="none" stroke="#c8c8c8" stroke-width="1"/></svg>
<svg style="left:1896px;top:752px" width="9" height="6" viewBox="0 0 9 6"><path d="M0.8,1 L4.5,5 L8.2,1" fill="none" stroke="#c8c8c8" stroke-width="1"/></svg>
<div class="t" style="left:1369px;top:247px;font-size:12px;color:#111;">Label:</div>
<div class="a" style="left:1410px;top:244px;width:449px;height:18px;background:#fff;border:1px solid #cfcfcf"></div>
<div class="t" style="left:1413px;top:247px;font-size:12px;color:#111;">Surface Average 1</div>
<div class="a" style="left:1867px;top:243px;width:20px;height:21px;background:#f0f0f0;border:1px solid #d0d0d0;border-radius:2px"></div><svg style="left:1869px;top:246px" width="16" height="15" viewBox="0 0 16 15"><rect x="1" y="0.5" width="14" height="13" fill="#fff" stroke="#666" stroke-width="1"/><path d="M1,3 H15" stroke="#666"/><path d="M5,6.5 H13 M5,9 H13 M5,11.5 H10" stroke="#2aa080" stroke-width="1"/><path d="M0,15 L4,11 M1,11 H4 V14" stroke="#2aa080" stroke-width="1.2" fill="none"/></svg>
<div class="a" style="left:1364px;top:273px;width:527px;height:26px;background:#dfe8f3"></div><div class="a" style="left:1369px;top:283px;width:0;height:0;border-left:5px solid transparent;border-right:5px solid transparent;border-top:5px solid #555"></div><div class="t" style="left:1390px;top:280px;font-size:13px;color:#111;">Data</div>
<div class="t" style="left:1369px;top:313px;font-size:12px;color:#111;">Dataset:</div>
<div class="a" style="left:1458px;top:309px;width:401px;height:21px;background:#ececec;border:1px solid #d3d3d3;border-radius:2px"></div><div class="t" style="left:1471px;top:314px;font-size:12px;color:#111;">Particle 1</div><div class="a" style="left:1843px;top:318px;width:0;height:0;border-left:4px solid transparent;border-right:4px solid transparent;border-top:4px solid #111"></div>
<div class="a" style="left:1867px;top:309px;width:20px;height:21px;background:#f0f0f0;border:1px solid #d0d0d0;border-radius:2px"></div><svg style="left:1869px;top:312px" width="16" height="15" viewBox="0 0 16 15"><path d="M2,1 H7 M2,4 H6 M2,7 H6 M2,10 H6 M2,13 H9" stroke="#666" stroke-width="1"/><path d="M9,6 H14 V14 M9,6 L11,4 M9,6 L11,8" stroke="#3a87c8" stroke-width="1.3" fill="none"/><path d="M11,1 H14" stroke="#3a87c8"/></svg>
<div class="t" style="left:1369px;top:341px;font-size:12px;color:#111;">Time selection:</div>
<div class="a" style="left:1458px;top:336px;width:429px;height:21px;background:#ececec;border:1px solid #d3d3d3;border-radius:2px"></div><div class="t" style="left:1471px;top:341px;font-size:12px;color:#111;">All</div><div class="a" style="left:1872px;top:345px;width:0;height:0;border-left:4px solid transparent;border-right:4px solid transparent;border-top:4px solid #111"></div>
<div class="a" style="left:1364px;top:368px;width:527px;height:26px;background:#dfe8f3"></div><div class="a" style="left:1369px;top:378px;width:0;height:0;border-left:5px solid transparent;border-right:5px solid transparent;border-top:5px solid #555"></div><div class="t" style="left:1390px;top:375px;font-size:13px;color:#111;">Selection</div>
<div class="t" style="left:1369px;top:408px;font-size:12px;color:#111;">Selection:</div>
<div class="a" style="left:1430px;top:403px;width:457px;height:21px;background:#ececec;border:1px solid #d3d3d3;border-radius:2px"></div><div class="t" style="left:1443px;top:408px;font-size:12px;color:#111;">Manual</div><div class="a" style="left:1872px;top:412px;width:0;height:0;border-left:4px solid transparent;border-right:4px solid transparent;border-top:4px solid #111"></div>
<div class="a" style="left:1369px;top:431px;width:38px;height:38px;background:#a9d5f9;border:1px solid #3a9ae8;border-radius:3px"></div>
<div class="a" style="left:1373px;top:443px;width:30px;height:13px;background:#e8e8e8;border:1.5px solid #555;border-radius:2px"></div>
<div class="a" style="left:1376px;top:446px;width:16px;height:7px;background:#4aaa40;border-radius:3px"></div>
<div class="a" style="left:1392px;top:445px;width:9px;height:9px;background:#c8c8c8;border:1px solid #666"></div>
<div class="a" style="left:1415px;top:430px;width:414px;height:120px;background:#fafbfd;border:1px solid #d3d3d3;border-bottom:3px solid #d0d0d0"></div>
<div class="t" style="left:1422px;top:436px;font-size:12px;color:#111;">2</div>
<svg style="left:1843px;top:431px" width="19" height="15" viewBox="0 0 19 15"><rect x="1" y="1" width="4" height="4" fill="#fff" stroke="#999" stroke-width="0.8"/><rect x="5" y="4" width="4" height="4" fill="#fff" stroke="#999" stroke-width="0.8"/><rect x="9" y="7" width="4" height="4" fill="#fff" stroke="#999" stroke-width="0.8"/><rect x="13" y="10" width="4" height="4" fill="#3a87c8"/></svg>
<svg style="left:1843px;top:450px" width="17" height="16" viewBox="0 0 17 16"><path d="M0.7,0.7 H8 V11 H0.7 Z" fill="#fff" stroke="#999" stroke-width="1"/><rect x="5.7" y="4.7" width="10.5" height="10.5" fill="#fff" stroke="#3a87c8" stroke-width="1.2"/><path d="M8,8 H14 M8,10.5 H14 M8,13 H14" stroke="#3a87c8" stroke-width="1"/></svg>
<svg style="left:1843px;top:470px" width="17" height="16" viewBox="0 0 17 16"><path d="M0.7,2.5 H10 V13 H0.7 Z" fill="#fff" stroke="#999" stroke-width="1.1"/><rect x="3" y="0.7" width="5" height="3" fill="#fff" stroke="#999" stroke-width="1"/><rect x="6.7" y="7.7" width="8.5" height="7.5" fill="#fff" stroke="#3a87c8" stroke-width="1.2"/></svg>
<svg style="left:1842px;top:489px" width="16" height="16" viewBox="0 0 16 16"><rect x="4" y="4" width="8" height="8" fill="#fff" stroke="#888" stroke-width="1"/><path d="M8,5.5 V10.5 M5.5,8 H10.5" stroke="#888" stroke-width="1"/><path d="M8,0 L6.5,2 H9.5 Z M8,16 L6.5,14 H9.5 Z M0,8 L2,6.5 V9.5 Z M16,8 L14,6.5 V9.5 Z" fill="#3a87c8"/></svg>
<svg style="left:1872px;top:431px" width="15" height="15" viewBox="0 0 15 15"><path d="M7.5,0 V15 M0,7.5 H15" stroke="#888" stroke-width="1"/></svg>
<svg style="left:1873px;top:458px" width="4" height="40" viewBox="0 0 4 40"><path d="M2,0 V8 M2,20 V32" stroke="#3a87c8" stroke-width="2"/></svg>
<div class="a" style="left:1873px;top:441px;width:26px;height:126px;background:#141414;border-radius:4px"></div>
<svg style="left:1876px;top:444px" width="20" height="120" viewBox="0 0 20 120"><circle cx="6" cy="6" r="3" fill="none" stroke="#fff" stroke-width="1.2"/><path d="M2,9 L9,3" stroke="#fff" stroke-width="1"/><circle cx="13" cy="6" r="1" fill="#fff"/><circle cx="16" cy="6" r="1" fill="#fff"/><circle cx="19" cy="6" r="1" fill="#fff"/><path d="M3,23 H7 L9,20.5 H13 L15,23 H19 V33 H3 Z" fill="#fff"/><circle cx="11" cy="28" r="3" fill="#141414"/><circle cx="11" cy="28" r="1.8" fill="#fff"/><rect x="3" y="46" width="12" height="10" rx="1.5" fill="#fff"/><path d="M15,49.5 L20,46.5 V55.5 L15,52.5 Z" fill="#fff"/><rect x="6" y="72" width="13" height="11" fill="#fff"/><path d="M3,86 V75 M3,75 H5" stroke="#fff" stroke-width="1.2"/><path d="M3,86 H16" stroke="#fff" stroke-width="1.2"/><circle cx="11" cy="105" r="6.5" fill="#fff"/><circle cx="11" cy="105" r="2.6" fill="#141414"/><rect x="9.3" y="96" width="3.4" height="4" fill="#fff" transform="rotate(0 11 105)"/><rect x="9.3" y="96" width="3.4" height="4" fill="#fff" transform="rotate(45 11 105)"/><rect x="9.3" y="96" width="3.4" height="4" fill="#fff" transform="rotate(90 11 105)"/><rect x="9.3" y="96" width="3.4" height="4" fill="#fff" transform="rotate(135 11 105)"/><rect x="9.3" y="96" width="3.4" height="4" fill="#fff" transform="rotate(180 11 105)"/><rect x="9.3" y="96" width="3.4" height="4" fill="#fff" transform="rotate(225 11 105)"/><rect x="9.3" y="96" width="3.4" height="4" fill="#fff" transform="rotate(270 11 105)"/><rect x="9.3" y="96" width="3.4" height="4" fill="#fff" transform="rotate(315 11 105)"/></svg>
<div class="a" style="left:1364px;top:561px;width:527px;height:26px;background:#dfe8f3"></div><div class="a" style="left:1369px;top:571px;width:0;height:0;border-left:5px solid transparent;border-right:5px solid transparent;border-top:5px solid #555"></div><div class="t" style="left:1390px;top:568px;font-size:13px;color:#111;">Expressions</div>
<svg style="left:1815px;top:567px" width="14" height="14" viewBox="0 0 14 14"><path d="M7,0 V14 M0,7 H14" stroke="#3a87c8" stroke-width="1.3"/></svg>
<div class="a" style="left:1834px;top:572px;width:0;height:0;border-left:3px solid transparent;border-right:3px solid transparent;border-top:3px solid #333"></div>
<svg style="left:1853px;top:566px" width="18" height="16" viewBox="0 0 18 16"><rect x="0.7" y="4" width="16" height="8" fill="#cfe3f6" stroke="#3a87c8" stroke-width="1.2"/><path d="M9,0 V16 M6.5,0.7 H11.5 M6.5,15.3 H11.5" stroke="#3a87c8" stroke-width="1.2"/><path d="M3,8 H7" stroke="#3a87c8"/></svg>
<div class="a" style="left:1873px;top:572px;width:0;height:0;border-left:3px solid transparent;border-right:3px solid transparent;border-top:3px solid #333"></div>
<div class="a" style="left:1369px;top:596px;width:518px;height:166px;background:#fafbfd;border:1px solid #cfcfcf;border-bottom:none"></div>
<div class="a" style="left:1370px;top:597px;width:516px;height:27px;background:#f0f0f0"></div>
<div class="a" style="left:1370px;top:624px;width:516px;height:20px;background:#fff;border-bottom:1px solid #c8c8c8"></div>
<div class="a" style="left:1370px;top:644px;width:516px;height:21px;background:#fff;border-bottom:1.5px solid #c0c0c0"></div>
<div class="a" style="left:1675px;top:597px;width:1px;height:68px;background:#c8c8c8"></div>
<div class="a" style="left:1735px;top:597px;width:1px;height:68px;background:#c8c8c8"></div>
<svg style="left:1373px;top:601px" width="9" height="8" viewBox="0 0 9 8"><path d="M0,0 L4,4 L0,8 Z M4.5,0 L8.5,4 L4.5,8 Z" fill="#111"/></svg>
<div class="t" style="left:1388px;top:607px;font-size:12px;color:#111;">Expression</div>
<div class="t" style="left:1681px;top:607px;font-size:12px;color:#111;">Unit</div>
<div class="t" style="left:1741px;top:607px;font-size:12px;color:#111;">Description</div>
<div class="t" style="left:1373px;top:628px;font-size:12px;color:#111;">fpt.Nsel</div>
<div class="t" style="left:1681px;top:628px;font-size:12px;color:#111;">1</div>
<div class="t" style="left:1739px;top:628px;font-size:12px;color:#111;">Total number of particles...</div>
<div class="a" style="left:420px;top:796px;width:1488px;height:1px;background:#d5d5d5"></div>
<div class="a" style="left:424px;top:773px;width:87px;height:23px;background:#ebebeb"></div>
<div class="t" style="left:428px;top:779px;font-size:13px;color:#111;">Messages</div>
<svg style="left:496px;top:780px" width="9" height="9" viewBox="0 0 9 9"><path d="M0.5,0.5 L8.5,8.5 M8.5,0.5 L0.5,8.5" stroke="#b9c3d0" stroke-width="1.1"/></svg>
<div class="a" style="left:519px;top:773px;width:60px;height:23px;background:#ebebeb"></div>
<div class="t" style="left:523px;top:779px;font-size:13px;color:#111;">Progress</div>
<div class="a" style="left:587px;top:773px;width:30px;height:23px;background:#ebebeb"></div>
<div class="t" style="left:591px;top:779px;font-size:13px;color:#111;">Log</div>
<div class="a" style="left:625px;top:773px;width:72px;height:24px;background:#f8f9fc;border:1px solid #d3d3d3;border-bottom:none"></div>
<div class="t" style="left:630px;top:780px;font-size:13px;color:#2a5da8;">Table 1</div>
<svg style="left:680px;top:781px" width="9" height="9" viewBox="0 0 9 9"><path d="M0.5,0.5 L8.5,8.5 M8.5,0.5 L0.5,8.5" stroke="#b9c3d0" stroke-width="1.1"/></svg>
<div class="a" style="left:1883px;top:784px;width:0;height:0;border-left:4px solid transparent;border-right:4px solid transparent;border-top:4px solid #444"></div>
<svg style="left:1899px;top:780px" width="7" height="12" viewBox="0 0 7 12"><path d="M1,0 H6 V6 H7 V7 H0 V6 H1 Z" fill="#555"/><path d="M3.5,7 V12" stroke="#555" stroke-width="1.2"/></svg>
<svg style="left:433px;top:804px" width="12" height="15" viewBox="0 0 12 15"><rect x="0.7" y="0.7" width="10.6" height="13.6" fill="#fff" stroke="#777" stroke-width="1.1"/><path d="M0.7,4.5 H11.3 M0.7,7.5 H11.3 M0.7,10.5 H11.3" stroke="#777" stroke-width="0.8"/><path d="M3,6 H9 M3,12.3 H9" stroke="#3a87c8" stroke-width="1"/></svg>
<div class="a" style="left:455px;top:804px;width:1px;height:16px;background:#d8d8d8"></div>
<div class="a" style="left:578px;top:804px;width:1px;height:16px;background:#d8d8d8"></div>
<div class="a" style="left:631px;top:804px;width:1px;height:16px;background:#d8d8d8"></div>
<div class="a" style="left:460px;top:802px;width:20px;height:20px;background:#a9d5f9;border:1px solid #3a9ae8;border-radius:3px"></div>
<div class="a" style="left:483px;top:802px;width:20px;height:20px;background:#a9d5f9;border:1px solid #3a9ae8;border-radius:3px"></div>
<div class="a" style="left:583px;top:802px;width:20px;height:20px;background:#a9d5f9;border:1px solid #3a9ae8;border-radius:3px"></div>
<div class="t" style="left:320px;width:300px;text-align:center;top:804px;font-size:8.5px;color:#3a87c8;letter-spacing:-0.3px">8.85</div>
<div class="t" style="left:320px;width:300px;text-align:center;top:813px;font-size:8.5px;color:#3a87c8;letter-spacing:-0.3px">e-12</div>
<div class="t" style="left:343px;width:300px;text-align:center;top:809px;font-size:7px;color:#3a87c8;font-weight:bold;letter-spacing:-0.4px">AUTO</div>
<div class="t" style="left:365px;width:300px;text-align:center;top:804px;font-size:8.5px;color:#3a87c8;">8.5</div>
<div class="t" style="left:365px;width:300px;text-align:center;top:813px;font-size:8.5px;color:#3a87c8;">e-1</div>
<div class="t" style="left:388px;width:300px;text-align:center;top:804px;font-size:8.5px;color:#3a87c8;">850</div>
<div class="t" style="left:388px;width:300px;text-align:center;top:813px;font-size:8.5px;color:#3a87c8;">e-3</div>
<div class="t" style="left:411px;width:300px;text-align:center;top:808px;font-size:9px;color:#3a87c8;">0.85</div>
<svg style="left:586px;top:806px" width="15" height="12" viewBox="0 0 15 12"><rect x="0.5" y="0.5" width="14" height="11" fill="#fff" stroke="#3a6fb0" stroke-width="1"/><rect x="1.8" y="2.0" width="1.6" height="1.8" fill="#3a6fb0"/><rect x="1.8" y="4.7" width="1.6" height="1.8" fill="#3a6fb0"/><rect x="1.8" y="7.4" width="1.6" height="1.8" fill="#3a6fb0"/><rect x="4.3" y="2.0" width="1.6" height="1.8" fill="#3a6fb0"/><rect x="4.3" y="4.7" width="1.6" height="1.8" fill="#3a6fb0"/><rect x="4.3" y="7.4" width="1.6" height="1.8" fill="#3a6fb0"/><rect x="6.8" y="2.0" width="1.6" height="1.8" fill="#3a6fb0"/><rect x="6.8" y="4.7" width="1.6" height="1.8" fill="#3a6fb0"/><rect x="6.8" y="7.4" width="1.6" height="1.8" fill="#3a6fb0"/><rect x="9.3" y="2.0" width="1.6" height="1.8" fill="#3a6fb0"/><rect x="9.3" y="4.7" width="1.6" height="1.8" fill="#3a6fb0"/><rect x="9.3" y="7.4" width="1.6" height="1.8" fill="#3a6fb0"/><rect x="11.8" y="2.0" width="1.6" height="1.8" fill="#3a6fb0"/><rect x="11.8" y="4.7" width="1.6" height="1.8" fill="#3a6fb0"/><rect x="11.8" y="7.4" width="1.6" height="1.8" fill="#3a6fb0"/></svg>
<svg style="left:608px;top:804px" width="16" height="16" viewBox="0 0 16 16"><circle cx="8" cy="8" r="7" fill="#fff" stroke="#3a87c8" stroke-width="1.1"/><ellipse cx="8" cy="8" rx="3.5" ry="7" fill="none" stroke="#3a87c8" stroke-width="0.9"/><path d="M1,8 H15 M8,1 V15 M2.5,4.5 H13.5 M2.5,11.5 H13.5" stroke="#3a87c8" stroke-width="0.9"/></svg>
<svg style="left:641px;top:803px" width="13" height="18" viewBox="0 0 13 18"><path d="M1,0 L6,9" stroke="#777" stroke-width="1.2"/><path d="M4,9 L8,8 L12,16 L7,17 Z" fill="#f0a040"/></svg>
<svg style="left:663px;top:804px" width="13" height="15" viewBox="0 0 13 15"><path d="M0,2.5 H13 M4,2.5 V0.7 H9 V2.5" fill="none" stroke="#3a87c8" stroke-width="1.3"/><path d="M1.5,3.5 H11.5 V14.5 H1.5 Z" fill="#3a87c8"/><path d="M4.5,5.5 V12.5 M6.5,5.5 V12.5 M8.5,5.5 V12.5" stroke="#fff" stroke-width="1"/></svg>
<svg style="left:686px;top:803px" width="15" height="16" viewBox="0 0 15 16"><path d="M1.5,0 V14.5 H15" fill="none" stroke="#888" stroke-width="1"/><rect x="3.5" y="3.5" width="10" height="9" fill="#fff" stroke="#b04fa0" stroke-width="1"/><path d="M3.5,6.5 H13.5 M3.5,9.5 H13.5 M7,3.5 V12.5" stroke="#b04fa0" stroke-width="0.9"/></svg>
<div class="a" style="left:709px;top:804px;width:15px;height:15px;background:#b04fa0"></div>
<svg style="left:730px;top:803px" width="17" height="17" viewBox="0 0 17 17"><path d="M3,3 C6,0 13,1 15,6 C17,11 14,16 9,16 C5,16 6,12 4,10 C1,8 0,5 3,3 Z" fill="none" stroke="#b04fa0" stroke-width="1.1"/><path d="M5,5 C7,3 11,4 12.5,7 C14,10 12,13.5 9.5,13.5 C7,13.5 8,11 6.5,9.5 C4.5,8 3.5,6.5 5,5 Z" fill="none" stroke="#b04fa0" stroke-width="1"/><path d="M7.5,7 C9,6.5 10.5,8 10.5,9.5 C10.5,11 9,11.5 8.5,10.5 C8,9.5 6.5,8 7.5,7 Z" fill="none" stroke="#b04fa0" stroke-width="0.9"/></svg>
<svg style="left:754px;top:804px" width="16" height="15" viewBox="0 0 16 15"><rect x="0.5" y="0.5" width="15" height="14" fill="#fff" stroke="#aaa" stroke-width="1"/><circle cx="4" cy="10" r="0.7" fill="#b04fa0"/><circle cx="6" cy="8" r="0.7" fill="#b04fa0"/><circle cx="8" cy="9" r="0.7" fill="#b04fa0"/><circle cx="9" cy="6" r="0.7" fill="#b04fa0"/><circle cx="11" cy="5" r="0.7" fill="#b04fa0"/><circle cx="7" cy="11" r="0.7" fill="#b04fa0"/><circle cx="10" cy="8" r="0.7" fill="#b04fa0"/><circle cx="12" cy="4" r="0.7" fill="#b04fa0"/></svg>
<svg style="left:777px;top:802px" width="17" height="18" viewBox="0 0 17 18"><rect x="0.5" y="0.5" width="10" height="12" fill="#fff" stroke="#777" stroke-width="1"/><path d="M2,3 H8 M2,5 H8" stroke="#777" stroke-width="0.8"/><rect x="5.5" y="6.5" width="11" height="11" fill="#fff" stroke="#3a87c8" stroke-width="1.2"/><path d="M5.5,10 H16.5 M5.5,13.5 H16.5 M10,10 V17" stroke="#3a87c8" stroke-width="1"/></svg>
<svg style="left:800px;top:804px" width="17" height="15" viewBox="0 0 17 15"><path d="M11,1 H0.7 V14 H11" fill="none" stroke="#777" stroke-width="1.2"/><path d="M0.7,4 H11" stroke="#777" stroke-width="1"/><path d="M5,9 H14 M11,6 L14.5,9 L11,12" fill="none" stroke="#3a87c8" stroke-width="1.6"/></svg>
<svg style="left:822px;top:803px" width="17" height="17" viewBox="0 0 17 17"><rect x="0.5" y="0.5" width="11" height="10" fill="#fff" stroke="#777" stroke-width="1"/><rect x="4.5" y="5.5" width="12" height="10" fill="#fff" stroke="#3a87c8" stroke-width="1.2"/><path d="M4.5,8.5 H16.5" stroke="#3a87c8"/><rect x="7" y="10.5" width="4" height="3" fill="none" stroke="#3a87c8" stroke-width="0.9"/><rect x="11" y="10.5" width="4" height="3" fill="none" stroke="#3a87c8" stroke-width="0.9"/></svg>
<svg style="left:846px;top:804px" width="15" height="15" viewBox="0 0 15 15"><rect x="0.7" y="0.7" width="13.6" height="13.6" fill="#fff" stroke="#b04fa0" stroke-width="1.1"/><path d="M0.7,4.2 H14.3 M0.7,7.5 H14.3 M0.7,10.8 H14.3 M5,0.7 V14.3 M9.7,0.7 V14.3" stroke="#b04fa0" stroke-width="1"/></svg>
<div class="a" style="left:867px;top:809px;width:0;height:0;border-left:4px solid transparent;border-right:4px solid transparent;border-top:4px solid #111"></div>
<div class="a" style="left:429px;top:828px;width:1471px;height:155px;background:#fdfdfe;border:1px solid #d3d3d3"></div>
<div class="t" style="left:1234px;top:1005px;font-size:11.6px;color:#111;">825 MB | 2897 MB</div>
</body></html>
